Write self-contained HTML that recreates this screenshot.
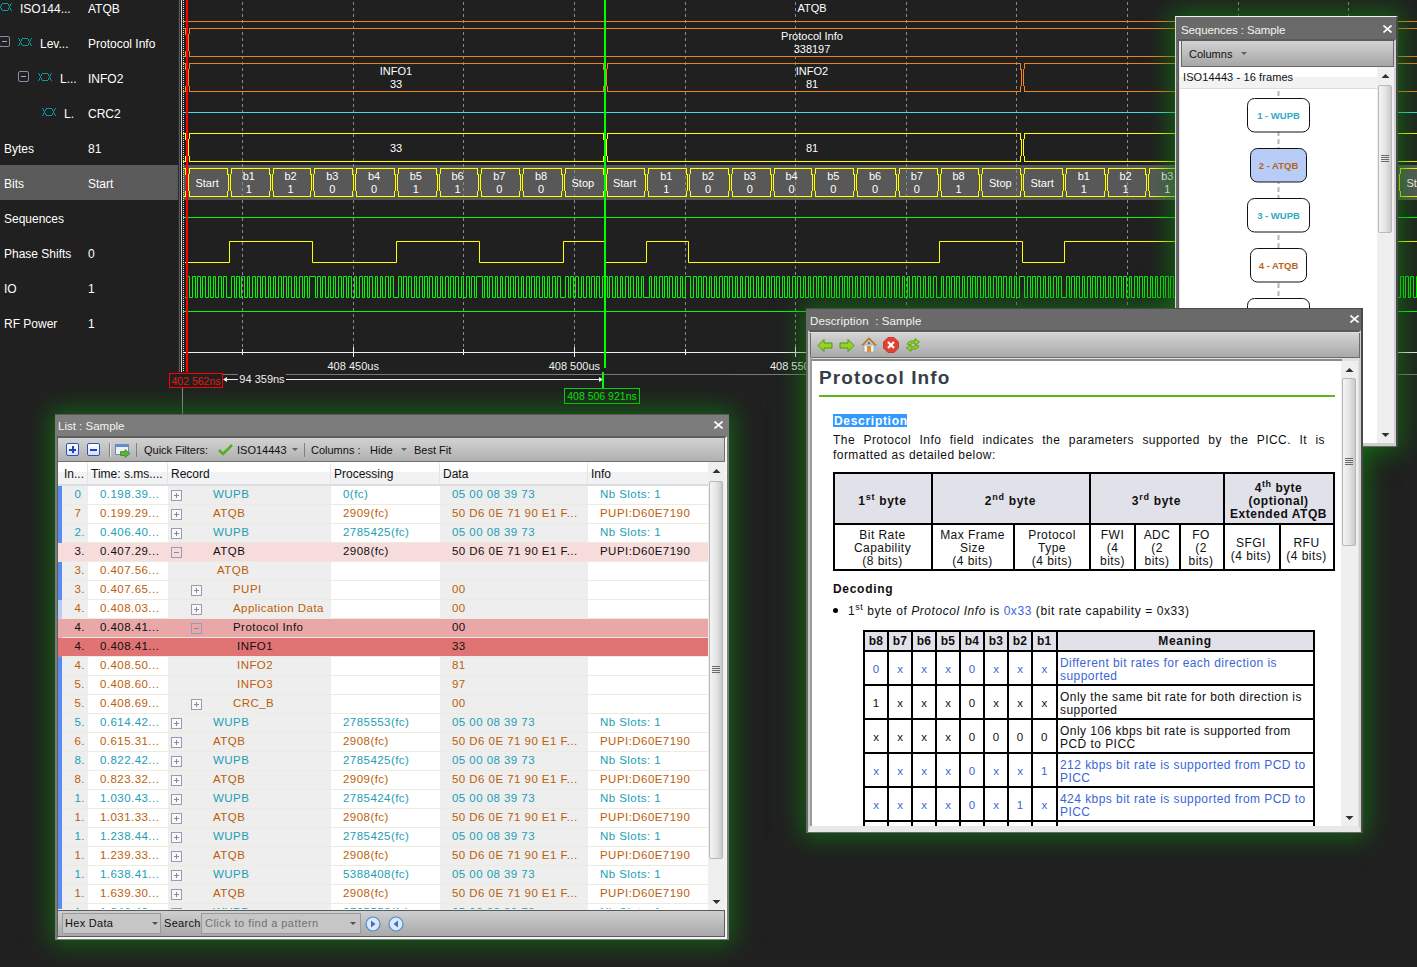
<!DOCTYPE html>
<html><head><meta charset="utf-8"><style>
html,body{margin:0;padding:0;}
body{width:1417px;height:967px;overflow:hidden;background:#202020;font-family:"Liberation Sans", sans-serif;position:relative;}
.p{position:absolute;}
</style></head><body>
<svg width="1417" height="967" style="position:absolute;left:0;top:0"><rect x="183" y="165" width="1234" height="35" fill="#585858"/><line x1="242.5" y1="2" x2="242.5" y2="347" stroke="#8a8a8a" stroke-width="1" stroke-dasharray="3,3"/><line x1="353.5" y1="2" x2="353.5" y2="347" stroke="#8a8a8a" stroke-width="1" stroke-dasharray="3,3"/><line x1="463.5" y1="2" x2="463.5" y2="347" stroke="#8a8a8a" stroke-width="1" stroke-dasharray="3,3"/><line x1="574.5" y1="2" x2="574.5" y2="347" stroke="#8a8a8a" stroke-width="1" stroke-dasharray="3,3"/><line x1="685.5" y1="2" x2="685.5" y2="347" stroke="#8a8a8a" stroke-width="1" stroke-dasharray="3,3"/><line x1="795.5" y1="2" x2="795.5" y2="347" stroke="#8a8a8a" stroke-width="1" stroke-dasharray="3,3"/><line x1="906.5" y1="2" x2="906.5" y2="347" stroke="#8a8a8a" stroke-width="1" stroke-dasharray="3,3"/><line x1="1016.5" y1="2" x2="1016.5" y2="347" stroke="#8a8a8a" stroke-width="1" stroke-dasharray="3,3"/><line x1="1127.5" y1="2" x2="1127.5" y2="347" stroke="#8a8a8a" stroke-width="1" stroke-dasharray="3,3"/><line x1="1238.5" y1="2" x2="1238.5" y2="347" stroke="#8a8a8a" stroke-width="1" stroke-dasharray="3,3"/><line x1="1348.5" y1="2" x2="1348.5" y2="347" stroke="#8a8a8a" stroke-width="1" stroke-dasharray="3,3"/><line x1="183" y1="21.5" x2="1417" y2="21.5" stroke="#f08418"/><polygon points="189.5,28.5 1598.5,28.5 1598.5,31.3 1599.5,37.46 1599.5,47.54 1598.5,53.7 1598.5,56.5 189.5,56.5 189.5,53.7 188.5,47.54 188.5,37.46 189.5,31.3" fill="none" stroke="#f08418" stroke-width="1" shape-rendering="crispEdges"/><polyline points="183,28.5 185.5,28.5 185.5,31.3 186.5,37.46 186.5,47.54 185.5,53.7 185.5,56.5 183,56.5" fill="none" stroke="#f08418" stroke-width="1" shape-rendering="crispEdges"/><polyline points="183,63.5 185.5,63.5 185.5,66.3 186.5,72.46000000000001 186.5,82.53999999999999 185.5,88.7 185.5,91.5 183,91.5" fill="none" stroke="#f08418" stroke-width="1" shape-rendering="crispEdges"/><polyline points="183,133.5 185.5,133.5 185.5,136.3 186.5,142.46 186.5,152.54 185.5,158.7 185.5,161.5 183,161.5" fill="none" stroke="#ffff00" stroke-width="1" shape-rendering="crispEdges"/><polyline points="183,168.5 185.5,168.5 185.5,171.3 186.5,177.46 186.5,187.54 185.5,193.7 185.5,196.5 183,196.5" fill="none" stroke="#ffff00" stroke-width="1" shape-rendering="crispEdges"/><polygon points="189.5,63.5 603.5,63.5 603.5,66.3 604.5,72.46000000000001 604.5,82.53999999999999 603.5,88.7 603.5,91.5 189.5,91.5 189.5,88.7 188.5,82.53999999999999 188.5,72.46000000000001 189.5,66.3" fill="none" stroke="#f08418" stroke-width="1" shape-rendering="crispEdges"/><polygon points="607.5,63.5 1020.5,63.5 1020.5,66.3 1021.5,72.46000000000001 1021.5,82.53999999999999 1020.5,88.7 1020.5,91.5 607.5,91.5 607.5,88.7 606.5,82.53999999999999 606.5,72.46000000000001 607.5,66.3" fill="none" stroke="#f08418" stroke-width="1" shape-rendering="crispEdges"/><polygon points="1024.5,63.5 1438.5,63.5 1438.5,66.3 1439.5,72.46000000000001 1439.5,82.53999999999999 1438.5,88.7 1438.5,91.5 1024.5,91.5 1024.5,88.7 1023.5,82.53999999999999 1023.5,72.46000000000001 1024.5,66.3" fill="none" stroke="#f08418" stroke-width="1" shape-rendering="crispEdges"/><line x1="183" y1="112.5" x2="1417" y2="112.5" stroke="#3ce0e8"/><polygon points="189.5,133.5 603.5,133.5 603.5,136.3 604.5,142.46 604.5,152.54 603.5,158.7 603.5,161.5 189.5,161.5 189.5,158.7 188.5,152.54 188.5,142.46 189.5,136.3" fill="none" stroke="#ffff00" stroke-width="1" shape-rendering="crispEdges"/><polygon points="607.5,133.5 1020.5,133.5 1020.5,136.3 1021.5,142.46 1021.5,152.54 1020.5,158.7 1020.5,161.5 607.5,161.5 607.5,158.7 606.5,152.54 606.5,142.46 607.5,136.3" fill="none" stroke="#ffff00" stroke-width="1" shape-rendering="crispEdges"/><polygon points="1024.5,133.5 1438.5,133.5 1438.5,136.3 1439.5,142.46 1439.5,152.54 1438.5,158.7 1438.5,161.5 1024.5,161.5 1024.5,158.7 1023.5,152.54 1023.5,142.46 1024.5,136.3" fill="none" stroke="#ffff00" stroke-width="1" shape-rendering="crispEdges"/><polygon points="189.5,168.5 227.5,168.5 227.5,171.3 228.5,177.46 228.5,187.54 227.5,193.7 227.5,196.5 189.5,196.5 189.5,193.7 188.5,187.54 188.5,177.46 189.5,171.3" fill="none" stroke="#ffff00" stroke-width="1" shape-rendering="crispEdges"/><polygon points="231.5,168.5 269.5,168.5 269.5,171.3 270.5,177.46 270.5,187.54 269.5,193.7 269.5,196.5 231.5,196.5 231.5,193.7 230.5,187.54 230.5,177.46 231.5,171.3" fill="none" stroke="#ffff00" stroke-width="1" shape-rendering="crispEdges"/><polygon points="273.5,168.5 310.5,168.5 310.5,171.3 311.5,177.46 311.5,187.54 310.5,193.7 310.5,196.5 273.5,196.5 273.5,193.7 272.5,187.54 272.5,177.46 273.5,171.3" fill="none" stroke="#ffff00" stroke-width="1" shape-rendering="crispEdges"/><polygon points="314.5,168.5 352.5,168.5 352.5,171.3 353.5,177.46 353.5,187.54 352.5,193.7 352.5,196.5 314.5,196.5 314.5,193.7 313.5,187.54 313.5,177.46 314.5,171.3" fill="none" stroke="#ffff00" stroke-width="1" shape-rendering="crispEdges"/><polygon points="356.5,168.5 394.5,168.5 394.5,171.3 395.5,177.46 395.5,187.54 394.5,193.7 394.5,196.5 356.5,196.5 356.5,193.7 355.5,187.54 355.5,177.46 356.5,171.3" fill="none" stroke="#ffff00" stroke-width="1" shape-rendering="crispEdges"/><polygon points="398.5,168.5 436.5,168.5 436.5,171.3 437.5,177.46 437.5,187.54 436.5,193.7 436.5,196.5 398.5,196.5 398.5,193.7 397.5,187.54 397.5,177.46 398.5,171.3" fill="none" stroke="#ffff00" stroke-width="1" shape-rendering="crispEdges"/><polygon points="440.5,168.5 477.5,168.5 477.5,171.3 478.5,177.46 478.5,187.54 477.5,193.7 477.5,196.5 440.5,196.5 440.5,193.7 439.5,187.54 439.5,177.46 440.5,171.3" fill="none" stroke="#ffff00" stroke-width="1" shape-rendering="crispEdges"/><polygon points="481.5,168.5 519.5,168.5 519.5,171.3 520.5,177.46 520.5,187.54 519.5,193.7 519.5,196.5 481.5,196.5 481.5,193.7 480.5,187.54 480.5,177.46 481.5,171.3" fill="none" stroke="#ffff00" stroke-width="1" shape-rendering="crispEdges"/><polygon points="523.5,168.5 561.5,168.5 561.5,171.3 562.5,177.46 562.5,187.54 561.5,193.7 561.5,196.5 523.5,196.5 523.5,193.7 522.5,187.54 522.5,177.46 523.5,171.3" fill="none" stroke="#ffff00" stroke-width="1" shape-rendering="crispEdges"/><polygon points="565.5,168.5 603.5,168.5 603.5,171.3 604.5,177.46 604.5,187.54 603.5,193.7 603.5,196.5 565.5,196.5 565.5,193.7 564.5,187.54 564.5,177.46 565.5,171.3" fill="none" stroke="#ffff00" stroke-width="1" shape-rendering="crispEdges"/><polygon points="607.5,168.5 644.5,168.5 644.5,171.3 645.5,177.46 645.5,187.54 644.5,193.7 644.5,196.5 607.5,196.5 607.5,193.7 606.5,187.54 606.5,177.46 607.5,171.3" fill="none" stroke="#ffff00" stroke-width="1" shape-rendering="crispEdges"/><polygon points="648.5,168.5 686.5,168.5 686.5,171.3 687.5,177.46 687.5,187.54 686.5,193.7 686.5,196.5 648.5,196.5 648.5,193.7 647.5,187.54 647.5,177.46 648.5,171.3" fill="none" stroke="#ffff00" stroke-width="1" shape-rendering="crispEdges"/><polygon points="690.5,168.5 728.5,168.5 728.5,171.3 729.5,177.46 729.5,187.54 728.5,193.7 728.5,196.5 690.5,196.5 690.5,193.7 689.5,187.54 689.5,177.46 690.5,171.3" fill="none" stroke="#ffff00" stroke-width="1" shape-rendering="crispEdges"/><polygon points="732.5,168.5 770.5,168.5 770.5,171.3 771.5,177.46 771.5,187.54 770.5,193.7 770.5,196.5 732.5,196.5 732.5,193.7 731.5,187.54 731.5,177.46 732.5,171.3" fill="none" stroke="#ffff00" stroke-width="1" shape-rendering="crispEdges"/><polygon points="774.5,168.5 811.5,168.5 811.5,171.3 812.5,177.46 812.5,187.54 811.5,193.7 811.5,196.5 774.5,196.5 774.5,193.7 773.5,187.54 773.5,177.46 774.5,171.3" fill="none" stroke="#ffff00" stroke-width="1" shape-rendering="crispEdges"/><polygon points="815.5,168.5 853.5,168.5 853.5,171.3 854.5,177.46 854.5,187.54 853.5,193.7 853.5,196.5 815.5,196.5 815.5,193.7 814.5,187.54 814.5,177.46 815.5,171.3" fill="none" stroke="#ffff00" stroke-width="1" shape-rendering="crispEdges"/><polygon points="857.5,168.5 895.5,168.5 895.5,171.3 896.5,177.46 896.5,187.54 895.5,193.7 895.5,196.5 857.5,196.5 857.5,193.7 856.5,187.54 856.5,177.46 857.5,171.3" fill="none" stroke="#ffff00" stroke-width="1" shape-rendering="crispEdges"/><polygon points="899.5,168.5 937.5,168.5 937.5,171.3 938.5,177.46 938.5,187.54 937.5,193.7 937.5,196.5 899.5,196.5 899.5,193.7 898.5,187.54 898.5,177.46 899.5,171.3" fill="none" stroke="#ffff00" stroke-width="1" shape-rendering="crispEdges"/><polygon points="941.5,168.5 978.5,168.5 978.5,171.3 979.5,177.46 979.5,187.54 978.5,193.7 978.5,196.5 941.5,196.5 941.5,193.7 940.5,187.54 940.5,177.46 941.5,171.3" fill="none" stroke="#ffff00" stroke-width="1" shape-rendering="crispEdges"/><polygon points="982.5,168.5 1020.5,168.5 1020.5,171.3 1021.5,177.46 1021.5,187.54 1020.5,193.7 1020.5,196.5 982.5,196.5 982.5,193.7 981.5,187.54 981.5,177.46 982.5,171.3" fill="none" stroke="#ffff00" stroke-width="1" shape-rendering="crispEdges"/><polygon points="1024.5,168.5 1062.5,168.5 1062.5,171.3 1063.5,177.46 1063.5,187.54 1062.5,193.7 1062.5,196.5 1024.5,196.5 1024.5,193.7 1023.5,187.54 1023.5,177.46 1024.5,171.3" fill="none" stroke="#ffff00" stroke-width="1" shape-rendering="crispEdges"/><polygon points="1066.5,168.5 1104.5,168.5 1104.5,171.3 1105.5,177.46 1105.5,187.54 1104.5,193.7 1104.5,196.5 1066.5,196.5 1066.5,193.7 1065.5,187.54 1065.5,177.46 1066.5,171.3" fill="none" stroke="#ffff00" stroke-width="1" shape-rendering="crispEdges"/><polygon points="1108.5,168.5 1145.5,168.5 1145.5,171.3 1146.5,177.46 1146.5,187.54 1145.5,193.7 1145.5,196.5 1108.5,196.5 1108.5,193.7 1107.5,187.54 1107.5,177.46 1108.5,171.3" fill="none" stroke="#ffff00" stroke-width="1" shape-rendering="crispEdges"/><polygon points="1149.5,168.5 1187.5,168.5 1187.5,171.3 1188.5,177.46 1188.5,187.54 1187.5,193.7 1187.5,196.5 1149.5,196.5 1149.5,193.7 1148.5,187.54 1148.5,177.46 1149.5,171.3" fill="none" stroke="#ffff00" stroke-width="1" shape-rendering="crispEdges"/><polygon points="1191.5,168.5 1229.5,168.5 1229.5,171.3 1230.5,177.46 1230.5,187.54 1229.5,193.7 1229.5,196.5 1191.5,196.5 1191.5,193.7 1190.5,187.54 1190.5,177.46 1191.5,171.3" fill="none" stroke="#ffff00" stroke-width="1" shape-rendering="crispEdges"/><polygon points="1233.5,168.5 1271.5,168.5 1271.5,171.3 1272.5,177.46 1272.5,187.54 1271.5,193.7 1271.5,196.5 1233.5,196.5 1233.5,193.7 1232.5,187.54 1232.5,177.46 1233.5,171.3" fill="none" stroke="#ffff00" stroke-width="1" shape-rendering="crispEdges"/><polygon points="1275.5,168.5 1312.5,168.5 1312.5,171.3 1313.5,177.46 1313.5,187.54 1312.5,193.7 1312.5,196.5 1275.5,196.5 1275.5,193.7 1274.5,187.54 1274.5,177.46 1275.5,171.3" fill="none" stroke="#ffff00" stroke-width="1" shape-rendering="crispEdges"/><polygon points="1316.5,168.5 1354.5,168.5 1354.5,171.3 1355.5,177.46 1355.5,187.54 1354.5,193.7 1354.5,196.5 1316.5,196.5 1316.5,193.7 1315.5,187.54 1315.5,177.46 1316.5,171.3" fill="none" stroke="#ffff00" stroke-width="1" shape-rendering="crispEdges"/><polygon points="1358.5,168.5 1396.5,168.5 1396.5,171.3 1397.5,177.46 1397.5,187.54 1396.5,193.7 1396.5,196.5 1358.5,196.5 1358.5,193.7 1357.5,187.54 1357.5,177.46 1358.5,171.3" fill="none" stroke="#ffff00" stroke-width="1" shape-rendering="crispEdges"/><polygon points="1400.5,168.5 1438.5,168.5 1438.5,171.3 1439.5,177.46 1439.5,187.54 1438.5,193.7 1438.5,196.5 1400.5,196.5 1400.5,193.7 1399.5,187.54 1399.5,177.46 1400.5,171.3" fill="none" stroke="#ffff00" stroke-width="1" shape-rendering="crispEdges"/><polygon points="1442.5,168.5 1479.5,168.5 1479.5,171.3 1480.5,177.46 1480.5,187.54 1479.5,193.7 1479.5,196.5 1442.5,196.5 1442.5,193.7 1441.5,187.54 1441.5,177.46 1442.5,171.3" fill="none" stroke="#ffff00" stroke-width="1" shape-rendering="crispEdges"/><polygon points="1483.5,168.5 1521.5,168.5 1521.5,171.3 1522.5,177.46 1522.5,187.54 1521.5,193.7 1521.5,196.5 1483.5,196.5 1483.5,193.7 1482.5,187.54 1482.5,177.46 1483.5,171.3" fill="none" stroke="#ffff00" stroke-width="1" shape-rendering="crispEdges"/><polygon points="1525.5,168.5 1563.5,168.5 1563.5,171.3 1564.5,177.46 1564.5,187.54 1563.5,193.7 1563.5,196.5 1525.5,196.5 1525.5,193.7 1524.5,187.54 1524.5,177.46 1525.5,171.3" fill="none" stroke="#ffff00" stroke-width="1" shape-rendering="crispEdges"/><polygon points="1567.5,168.5 1605.5,168.5 1605.5,171.3 1606.5,177.46 1606.5,187.54 1605.5,193.7 1605.5,196.5 1567.5,196.5 1567.5,193.7 1566.5,187.54 1566.5,177.46 1567.5,171.3" fill="none" stroke="#ffff00" stroke-width="1" shape-rendering="crispEdges"/><polygon points="1609.5,168.5 1646.5,168.5 1646.5,171.3 1647.5,177.46 1647.5,187.54 1646.5,193.7 1646.5,196.5 1609.5,196.5 1609.5,193.7 1608.5,187.54 1608.5,177.46 1609.5,171.3" fill="none" stroke="#ffff00" stroke-width="1" shape-rendering="crispEdges"/><polygon points="1650.5,168.5 1688.5,168.5 1688.5,171.3 1689.5,177.46 1689.5,187.54 1688.5,193.7 1688.5,196.5 1650.5,196.5 1650.5,193.7 1649.5,187.54 1649.5,177.46 1650.5,171.3" fill="none" stroke="#ffff00" stroke-width="1" shape-rendering="crispEdges"/><polygon points="1692.5,168.5 1730.5,168.5 1730.5,171.3 1731.5,177.46 1731.5,187.54 1730.5,193.7 1730.5,196.5 1692.5,196.5 1692.5,193.7 1691.5,187.54 1691.5,177.46 1692.5,171.3" fill="none" stroke="#ffff00" stroke-width="1" shape-rendering="crispEdges"/><polygon points="1734.5,168.5 1772.5,168.5 1772.5,171.3 1773.5,177.46 1773.5,187.54 1772.5,193.7 1772.5,196.5 1734.5,196.5 1734.5,193.7 1733.5,187.54 1733.5,177.46 1734.5,171.3" fill="none" stroke="#ffff00" stroke-width="1" shape-rendering="crispEdges"/><polygon points="1776.5,168.5 1813.5,168.5 1813.5,171.3 1814.5,177.46 1814.5,187.54 1813.5,193.7 1813.5,196.5 1776.5,196.5 1776.5,193.7 1775.5,187.54 1775.5,177.46 1776.5,171.3" fill="none" stroke="#ffff00" stroke-width="1" shape-rendering="crispEdges"/><polygon points="1817.5,168.5 1855.5,168.5 1855.5,171.3 1856.5,177.46 1856.5,187.54 1855.5,193.7 1855.5,196.5 1817.5,196.5 1817.5,193.7 1816.5,187.54 1816.5,177.46 1817.5,171.3" fill="none" stroke="#ffff00" stroke-width="1" shape-rendering="crispEdges"/><line x1="183" y1="217.5" x2="1417" y2="217.5" stroke="#00ff00"/><line x1="183" y1="311.5" x2="1417" y2="311.5" stroke="#00ff00"/><polyline points="185,262.5 229.5,262.5 229.5,241.5 312.5,241.5 312.5,262.5 396.5,262.5 396.5,241.5 479.5,241.5 479.5,262.5 563.5,262.5 563.5,241.5 605.5,241.5 605.5,262.5 646.5,262.5 646.5,241.5 688.5,241.5 688.5,262.5 939.5,262.5 939.5,241.5 1022.5,241.5 1022.5,262.5 1064.5,262.5 1064.5,241.5 1189.5,241.5 1189.5,262.5 1356.5,262.5 1356.5,241.5 1440.5,241.5 1440.5,262.5 1815.5,262.5 1815.5,241.5 1417,241.5" fill="none" stroke="#ffff00"/><path d="M185,297.5L187.5,297.5L187.5,276.5L189.5,276.5L189.5,297.5L192.5,297.5L192.5,276.5L195.5,276.5L195.5,297.5L197.5,297.5L197.5,276.5L200.5,276.5L200.5,297.5L202.5,297.5L202.5,276.5L205.5,276.5L205.5,297.5L208.5,297.5L208.5,276.5L210.5,276.5L210.5,297.5L213.5,297.5L213.5,276.5L215.5,276.5L215.5,297.5L218.5,297.5L218.5,276.5L221.5,276.5L221.5,297.5L223.5,297.5L223.5,276.5L226.5,276.5L226.5,297.5L231.5,297.5L231.5,276.5L234.5,276.5L234.5,297.5L236.5,297.5L236.5,276.5L239.5,276.5L239.5,297.5L241.5,297.5L241.5,276.5L244.5,276.5L244.5,297.5L247.5,297.5L247.5,276.5L249.5,276.5L249.5,297.5L252.5,297.5L252.5,276.5L255.5,276.5L255.5,297.5L257.5,297.5L257.5,276.5L260.5,276.5L260.5,297.5L262.5,297.5L262.5,276.5L265.5,276.5L265.5,297.5L268.5,297.5L268.5,276.5L270.5,276.5L270.5,297.5L273.5,297.5L273.5,276.5L275.5,276.5L275.5,297.5L278.5,297.5L278.5,276.5L281.5,276.5L281.5,297.5L283.5,297.5L283.5,276.5L286.5,276.5L286.5,297.5L288.5,297.5L288.5,276.5L291.5,276.5L291.5,297.5L294.5,297.5L294.5,276.5L296.5,276.5L296.5,297.5L299.5,297.5L299.5,276.5L302.5,276.5L302.5,297.5L304.5,297.5L304.5,276.5L307.5,276.5L307.5,297.5L309.5,297.5L309.5,276.5L315.5,276.5L315.5,297.5L317.5,297.5L317.5,276.5L320.5,276.5L320.5,297.5L322.5,297.5L322.5,276.5L325.5,276.5L325.5,297.5L328.5,297.5L328.5,276.5L330.5,276.5L330.5,297.5L333.5,297.5L333.5,276.5L335.5,276.5L335.5,297.5L338.5,297.5L338.5,276.5L341.5,276.5L341.5,297.5L343.5,297.5L343.5,276.5L346.5,276.5L346.5,297.5L348.5,297.5L348.5,276.5L351.5,276.5L351.5,297.5L354.5,297.5L354.5,276.5L356.5,276.5L356.5,297.5L359.5,297.5L359.5,276.5L362.5,276.5L362.5,297.5L364.5,297.5L364.5,276.5L367.5,276.5L367.5,297.5L369.5,297.5L369.5,276.5L372.5,276.5L372.5,297.5L375.5,297.5L375.5,276.5L377.5,276.5L377.5,297.5L380.5,297.5L380.5,276.5L382.5,276.5L382.5,297.5L385.5,297.5L385.5,276.5L388.5,276.5L388.5,297.5L390.5,297.5L390.5,276.5L393.5,276.5L393.5,297.5L398.5,297.5L398.5,276.5L401.5,276.5L401.5,297.5L403.5,297.5L403.5,276.5L406.5,276.5L406.5,297.5L408.5,297.5L408.5,276.5L411.5,276.5L411.5,297.5L414.5,297.5L414.5,276.5L416.5,276.5L416.5,297.5L419.5,297.5L419.5,276.5L422.5,276.5L422.5,297.5L424.5,297.5L424.5,276.5L427.5,276.5L427.5,297.5L429.5,297.5L429.5,276.5L432.5,276.5L432.5,297.5L435.5,297.5L435.5,276.5L437.5,276.5L437.5,297.5L440.5,297.5L440.5,276.5L442.5,276.5L442.5,297.5L445.5,297.5L445.5,276.5L448.5,276.5L448.5,297.5L450.5,297.5L450.5,276.5L453.5,276.5L453.5,297.5L455.5,297.5L455.5,276.5L458.5,276.5L458.5,297.5L461.5,297.5L461.5,276.5L463.5,276.5L463.5,297.5L466.5,297.5L466.5,276.5L469.5,276.5L469.5,297.5L471.5,297.5L471.5,276.5L474.5,276.5L474.5,297.5L476.5,297.5L476.5,276.5L482.5,276.5L482.5,297.5L484.5,297.5L484.5,276.5L487.5,276.5L487.5,297.5L489.5,297.5L489.5,276.5L492.5,276.5L492.5,297.5L495.5,297.5L495.5,276.5L497.5,276.5L497.5,297.5L500.5,297.5L500.5,276.5L502.5,276.5L502.5,297.5L505.5,297.5L505.5,276.5L508.5,276.5L508.5,297.5L510.5,297.5L510.5,276.5L513.5,276.5L513.5,297.5L515.5,297.5L515.5,276.5L518.5,276.5L518.5,297.5L521.5,297.5L521.5,276.5L523.5,276.5L523.5,297.5L526.5,297.5L526.5,276.5L529.5,276.5L529.5,297.5L531.5,297.5L531.5,276.5L534.5,276.5L534.5,297.5L536.5,297.5L536.5,276.5L539.5,276.5L539.5,297.5L542.5,297.5L542.5,276.5L544.5,276.5L544.5,297.5L547.5,297.5L547.5,276.5L549.5,276.5L549.5,297.5L552.5,297.5L552.5,276.5L555.5,276.5L555.5,297.5L557.5,297.5L557.5,276.5L560.5,276.5L560.5,297.5L565.5,297.5L565.5,276.5L568.5,276.5L568.5,297.5L570.5,297.5L570.5,276.5L573.5,276.5L573.5,297.5L575.5,297.5L575.5,276.5L578.5,276.5L578.5,297.5L581.5,297.5L581.5,276.5L583.5,276.5L583.5,297.5L586.5,297.5L586.5,276.5L589.5,276.5L589.5,297.5L591.5,297.5L591.5,276.5L594.5,276.5L594.5,297.5L596.5,297.5L596.5,276.5L599.5,276.5L599.5,297.5L602.5,297.5L602.5,276.5L607.5,276.5L607.5,297.5L609.5,297.5L609.5,276.5L612.5,276.5L612.5,297.5L615.5,297.5L615.5,276.5L617.5,276.5L617.5,297.5L620.5,297.5L620.5,276.5L622.5,276.5L622.5,297.5L625.5,297.5L625.5,276.5L628.5,276.5L628.5,297.5L630.5,297.5L630.5,276.5L633.5,276.5L633.5,297.5L636.5,297.5L636.5,276.5L638.5,276.5L638.5,297.5L641.5,297.5L641.5,276.5L643.5,276.5L643.5,297.5L649.5,297.5L649.5,276.5L651.5,276.5L651.5,297.5L654.5,297.5L654.5,276.5L656.5,276.5L656.5,297.5L659.5,297.5L659.5,276.5L662.5,276.5L662.5,297.5L664.5,297.5L664.5,276.5L667.5,276.5L667.5,297.5L669.5,297.5L669.5,276.5L672.5,276.5L672.5,297.5L675.5,297.5L675.5,276.5L677.5,276.5L677.5,297.5L680.5,297.5L680.5,276.5L682.5,276.5L682.5,297.5L685.5,297.5L685.5,276.5L690.5,276.5L690.5,297.5L693.5,297.5L693.5,276.5L696.5,276.5L696.5,297.5L698.5,297.5L698.5,276.5L701.5,276.5L701.5,297.5L703.5,297.5L703.5,276.5L706.5,276.5L706.5,297.5L709.5,297.5L709.5,276.5L711.5,276.5L711.5,297.5L714.5,297.5L714.5,276.5L716.5,276.5L716.5,297.5L719.5,297.5L719.5,276.5L722.5,276.5L722.5,297.5L724.5,297.5L724.5,276.5L727.5,276.5L727.5,297.5L729.5,297.5L729.5,276.5L732.5,276.5L732.5,297.5L735.5,297.5L735.5,276.5L737.5,276.5L737.5,297.5L740.5,297.5L740.5,276.5L742.5,276.5L742.5,297.5L745.5,297.5L745.5,276.5L748.5,276.5L748.5,297.5L750.5,297.5L750.5,276.5L753.5,276.5L753.5,297.5L756.5,297.5L756.5,276.5L758.5,276.5L758.5,297.5L761.5,297.5L761.5,276.5L763.5,276.5L763.5,297.5L766.5,297.5L766.5,276.5L769.5,276.5L769.5,297.5L771.5,297.5L771.5,276.5L774.5,276.5L774.5,297.5L776.5,297.5L776.5,276.5L779.5,276.5L779.5,297.5L782.5,297.5L782.5,276.5L784.5,276.5L784.5,297.5L787.5,297.5L787.5,276.5L789.5,276.5L789.5,297.5L792.5,297.5L792.5,276.5L795.5,276.5L795.5,297.5L797.5,297.5L797.5,276.5L800.5,276.5L800.5,297.5L803.5,297.5L803.5,276.5L805.5,276.5L805.5,297.5L808.5,297.5L808.5,276.5L810.5,276.5L810.5,297.5L813.5,297.5L813.5,276.5L816.5,276.5L816.5,297.5L818.5,297.5L818.5,276.5L821.5,276.5L821.5,297.5L823.5,297.5L823.5,276.5L826.5,276.5L826.5,297.5L829.5,297.5L829.5,276.5L831.5,276.5L831.5,297.5L834.5,297.5L834.5,276.5L836.5,276.5L836.5,297.5L839.5,297.5L839.5,276.5L842.5,276.5L842.5,297.5L844.5,297.5L844.5,276.5L847.5,276.5L847.5,297.5L849.5,297.5L849.5,276.5L852.5,276.5L852.5,297.5L855.5,297.5L855.5,276.5L857.5,276.5L857.5,297.5L860.5,297.5L860.5,276.5L863.5,276.5L863.5,297.5L865.5,297.5L865.5,276.5L868.5,276.5L868.5,297.5L870.5,297.5L870.5,276.5L873.5,276.5L873.5,297.5L876.5,297.5L876.5,276.5L878.5,276.5L878.5,297.5L881.5,297.5L881.5,276.5L883.5,276.5L883.5,297.5L886.5,297.5L886.5,276.5L889.5,276.5L889.5,297.5L891.5,297.5L891.5,276.5L894.5,276.5L894.5,297.5L896.5,297.5L896.5,276.5L899.5,276.5L899.5,297.5L902.5,297.5L902.5,276.5L904.5,276.5L904.5,297.5L907.5,297.5L907.5,276.5L909.5,276.5L909.5,297.5L912.5,297.5L912.5,276.5L915.5,276.5L915.5,297.5L917.5,297.5L917.5,276.5L920.5,276.5L920.5,297.5L923.5,297.5L923.5,276.5L925.5,276.5L925.5,297.5L928.5,297.5L928.5,276.5L930.5,276.5L930.5,297.5L933.5,297.5L933.5,276.5L936.5,276.5L936.5,297.5L941.5,297.5L941.5,276.5L943.5,276.5L943.5,297.5L946.5,297.5L946.5,276.5L949.5,276.5L949.5,297.5L951.5,297.5L951.5,276.5L954.5,276.5L954.5,297.5L956.5,297.5L956.5,276.5L959.5,276.5L959.5,297.5L962.5,297.5L962.5,276.5L964.5,276.5L964.5,297.5L967.5,297.5L967.5,276.5L970.5,276.5L970.5,297.5L972.5,297.5L972.5,276.5L975.5,276.5L975.5,297.5L977.5,297.5L977.5,276.5L980.5,276.5L980.5,297.5L983.5,297.5L983.5,276.5L985.5,276.5L985.5,297.5L988.5,297.5L988.5,276.5L990.5,276.5L990.5,297.5L993.5,297.5L993.5,276.5L996.5,276.5L996.5,297.5L998.5,297.5L998.5,276.5L1001.5,276.5L1001.5,297.5L1003.5,297.5L1003.5,276.5L1006.5,276.5L1006.5,297.5L1009.5,297.5L1009.5,276.5L1011.5,276.5L1011.5,297.5L1014.5,297.5L1014.5,276.5L1016.5,276.5L1016.5,297.5L1019.5,297.5L1019.5,276.5L1024.5,276.5L1024.5,297.5L1027.5,297.5L1027.5,276.5L1030.5,276.5L1030.5,297.5L1032.5,297.5L1032.5,276.5L1035.5,276.5L1035.5,297.5L1037.5,297.5L1037.5,276.5L1040.5,276.5L1040.5,297.5L1043.5,297.5L1043.5,276.5L1045.5,276.5L1045.5,297.5L1048.5,297.5L1048.5,276.5L1050.5,276.5L1050.5,297.5L1053.5,297.5L1053.5,276.5L1056.5,276.5L1056.5,297.5L1058.5,297.5L1058.5,276.5L1061.5,276.5L1061.5,297.5L1066.5,297.5L1066.5,276.5L1069.5,276.5L1069.5,297.5L1071.5,297.5L1071.5,276.5L1074.5,276.5L1074.5,297.5L1076.5,297.5L1076.5,276.5L1079.5,276.5L1079.5,297.5L1082.5,297.5L1082.5,276.5L1084.5,276.5L1084.5,297.5L1087.5,297.5L1087.5,276.5L1090.5,276.5L1090.5,297.5L1092.5,297.5L1092.5,276.5L1095.5,276.5L1095.5,297.5L1097.5,297.5L1097.5,276.5L1100.5,276.5L1100.5,297.5L1103.5,297.5L1103.5,276.5L1105.5,276.5L1105.5,297.5L1108.5,297.5L1108.5,276.5L1110.5,276.5L1110.5,297.5L1113.5,297.5L1113.5,276.5L1116.5,276.5L1116.5,297.5L1118.5,297.5L1118.5,276.5L1121.5,276.5L1121.5,297.5L1123.5,297.5L1123.5,276.5L1126.5,276.5L1126.5,297.5L1129.5,297.5L1129.5,276.5L1131.5,276.5L1131.5,297.5L1134.5,297.5L1134.5,276.5L1137.5,276.5L1137.5,297.5L1139.5,297.5L1139.5,276.5L1142.5,276.5L1142.5,297.5L1144.5,297.5L1144.5,276.5L1147.5,276.5L1147.5,297.5L1150.5,297.5L1150.5,276.5L1152.5,276.5L1152.5,297.5L1155.5,297.5L1155.5,276.5L1157.5,276.5L1157.5,297.5L1160.5,297.5L1160.5,276.5L1163.5,276.5L1163.5,297.5L1165.5,297.5L1165.5,276.5L1168.5,276.5L1168.5,297.5L1170.5,297.5L1170.5,276.5L1173.5,276.5L1173.5,297.5L1176.5,297.5L1176.5,276.5L1178.5,276.5L1178.5,297.5L1181.5,297.5L1181.5,276.5L1183.5,276.5L1183.5,297.5L1186.5,297.5L1186.5,276.5L1191.5,276.5L1191.5,297.5L1194.5,297.5L1194.5,276.5L1197.5,276.5L1197.5,297.5L1199.5,297.5L1199.5,276.5L1202.5,276.5L1202.5,297.5L1204.5,297.5L1204.5,276.5L1207.5,276.5L1207.5,297.5L1210.5,297.5L1210.5,276.5L1212.5,276.5L1212.5,297.5L1215.5,297.5L1215.5,276.5L1217.5,276.5L1217.5,297.5L1220.5,297.5L1220.5,276.5L1223.5,276.5L1223.5,297.5L1225.5,297.5L1225.5,276.5L1228.5,276.5L1228.5,297.5L1230.5,297.5L1230.5,276.5L1233.5,276.5L1233.5,297.5L1236.5,297.5L1236.5,276.5L1238.5,276.5L1238.5,297.5L1241.5,297.5L1241.5,276.5L1243.5,276.5L1243.5,297.5L1246.5,297.5L1246.5,276.5L1249.5,276.5L1249.5,297.5L1251.5,297.5L1251.5,276.5L1254.5,276.5L1254.5,297.5L1257.5,297.5L1257.5,276.5L1259.5,276.5L1259.5,297.5L1262.5,297.5L1262.5,276.5L1264.5,276.5L1264.5,297.5L1267.5,297.5L1267.5,276.5L1270.5,276.5L1270.5,297.5L1272.5,297.5L1272.5,276.5L1275.5,276.5L1275.5,297.5L1277.5,297.5L1277.5,276.5L1280.5,276.5L1280.5,297.5L1283.5,297.5L1283.5,276.5L1285.5,276.5L1285.5,297.5L1288.5,297.5L1288.5,276.5L1290.5,276.5L1290.5,297.5L1293.5,297.5L1293.5,276.5L1296.5,276.5L1296.5,297.5L1298.5,297.5L1298.5,276.5L1301.5,276.5L1301.5,297.5L1304.5,297.5L1304.5,276.5L1306.5,276.5L1306.5,297.5L1309.5,297.5L1309.5,276.5L1311.5,276.5L1311.5,297.5L1314.5,297.5L1314.5,276.5L1317.5,276.5L1317.5,297.5L1319.5,297.5L1319.5,276.5L1322.5,276.5L1322.5,297.5L1324.5,297.5L1324.5,276.5L1327.5,276.5L1327.5,297.5L1330.5,297.5L1330.5,276.5L1332.5,276.5L1332.5,297.5L1335.5,297.5L1335.5,276.5L1337.5,276.5L1337.5,297.5L1340.5,297.5L1340.5,276.5L1343.5,276.5L1343.5,297.5L1345.5,297.5L1345.5,276.5L1348.5,276.5L1348.5,297.5L1350.5,297.5L1350.5,276.5L1353.5,276.5L1353.5,297.5L1358.5,297.5L1358.5,276.5L1361.5,276.5L1361.5,297.5L1364.5,297.5L1364.5,276.5L1366.5,276.5L1366.5,297.5L1369.5,297.5L1369.5,276.5L1371.5,276.5L1371.5,297.5L1374.5,297.5L1374.5,276.5L1377.5,276.5L1377.5,297.5L1379.5,297.5L1379.5,276.5L1382.5,276.5L1382.5,297.5L1384.5,297.5L1384.5,276.5L1387.5,276.5L1387.5,297.5L1390.5,297.5L1390.5,276.5L1392.5,276.5L1392.5,297.5L1395.5,297.5L1395.5,276.5L1397.5,276.5L1397.5,297.5L1400.5,297.5L1400.5,276.5L1403.5,276.5L1403.5,297.5L1405.5,297.5L1405.5,276.5L1408.5,276.5L1408.5,297.5L1410.5,297.5L1410.5,276.5L1413.5,276.5L1413.5,297.5L1416.5,297.5L1416.5,276.5L1418.5,276.5L1418.5,297.5L1417,297.5" fill="none" stroke="#00f800" stroke-width="1"/><text x="812" y="12" fill="#ffffff" font-size="11" text-anchor="middle" font-family='"Liberation Sans", sans-serif'>ATQB</text><text x="812" y="40" fill="#ffffff" font-size="11" text-anchor="middle" font-family='"Liberation Sans", sans-serif'>Protocol Info</text><text x="812" y="53" fill="#ffffff" font-size="11" text-anchor="middle" font-family='"Liberation Sans", sans-serif'>338197</text><text x="396" y="75" fill="#ffffff" font-size="11" text-anchor="middle" font-family='"Liberation Sans", sans-serif'>INFO1</text><text x="396" y="88" fill="#ffffff" font-size="11" text-anchor="middle" font-family='"Liberation Sans", sans-serif'>33</text><text x="812" y="75" fill="#ffffff" font-size="11" text-anchor="middle" font-family='"Liberation Sans", sans-serif'>INFO2</text><text x="812" y="88" fill="#ffffff" font-size="11" text-anchor="middle" font-family='"Liberation Sans", sans-serif'>81</text><text x="396" y="152" fill="#ffffff" font-size="11" text-anchor="middle" font-family='"Liberation Sans", sans-serif'>33</text><text x="812" y="152" fill="#ffffff" font-size="11" text-anchor="middle" font-family='"Liberation Sans", sans-serif'>81</text><text x="207.075" y="187" fill="#ffffff" font-size="11" text-anchor="middle" font-family='"Liberation Sans", sans-serif'>Start</text><text x="248.825" y="180" fill="#ffffff" font-size="11" text-anchor="middle" font-family='"Liberation Sans", sans-serif'>b1</text><text x="248.825" y="193" fill="#ffffff" font-size="11" text-anchor="middle" font-family='"Liberation Sans", sans-serif'>1</text><text x="290.575" y="180" fill="#ffffff" font-size="11" text-anchor="middle" font-family='"Liberation Sans", sans-serif'>b2</text><text x="290.575" y="193" fill="#ffffff" font-size="11" text-anchor="middle" font-family='"Liberation Sans", sans-serif'>1</text><text x="332.325" y="180" fill="#ffffff" font-size="11" text-anchor="middle" font-family='"Liberation Sans", sans-serif'>b3</text><text x="332.325" y="193" fill="#ffffff" font-size="11" text-anchor="middle" font-family='"Liberation Sans", sans-serif'>0</text><text x="374.075" y="180" fill="#ffffff" font-size="11" text-anchor="middle" font-family='"Liberation Sans", sans-serif'>b4</text><text x="374.075" y="193" fill="#ffffff" font-size="11" text-anchor="middle" font-family='"Liberation Sans", sans-serif'>0</text><text x="415.825" y="180" fill="#ffffff" font-size="11" text-anchor="middle" font-family='"Liberation Sans", sans-serif'>b5</text><text x="415.825" y="193" fill="#ffffff" font-size="11" text-anchor="middle" font-family='"Liberation Sans", sans-serif'>1</text><text x="457.575" y="180" fill="#ffffff" font-size="11" text-anchor="middle" font-family='"Liberation Sans", sans-serif'>b6</text><text x="457.575" y="193" fill="#ffffff" font-size="11" text-anchor="middle" font-family='"Liberation Sans", sans-serif'>1</text><text x="499.325" y="180" fill="#ffffff" font-size="11" text-anchor="middle" font-family='"Liberation Sans", sans-serif'>b7</text><text x="499.325" y="193" fill="#ffffff" font-size="11" text-anchor="middle" font-family='"Liberation Sans", sans-serif'>0</text><text x="541.075" y="180" fill="#ffffff" font-size="11" text-anchor="middle" font-family='"Liberation Sans", sans-serif'>b8</text><text x="541.075" y="193" fill="#ffffff" font-size="11" text-anchor="middle" font-family='"Liberation Sans", sans-serif'>0</text><text x="582.825" y="187" fill="#ffffff" font-size="11" text-anchor="middle" font-family='"Liberation Sans", sans-serif'>Stop</text><text x="624.575" y="187" fill="#ffffff" font-size="11" text-anchor="middle" font-family='"Liberation Sans", sans-serif'>Start</text><text x="666.325" y="180" fill="#ffffff" font-size="11" text-anchor="middle" font-family='"Liberation Sans", sans-serif'>b1</text><text x="666.325" y="193" fill="#ffffff" font-size="11" text-anchor="middle" font-family='"Liberation Sans", sans-serif'>1</text><text x="708.075" y="180" fill="#ffffff" font-size="11" text-anchor="middle" font-family='"Liberation Sans", sans-serif'>b2</text><text x="708.075" y="193" fill="#ffffff" font-size="11" text-anchor="middle" font-family='"Liberation Sans", sans-serif'>0</text><text x="749.825" y="180" fill="#ffffff" font-size="11" text-anchor="middle" font-family='"Liberation Sans", sans-serif'>b3</text><text x="749.825" y="193" fill="#ffffff" font-size="11" text-anchor="middle" font-family='"Liberation Sans", sans-serif'>0</text><text x="791.575" y="180" fill="#ffffff" font-size="11" text-anchor="middle" font-family='"Liberation Sans", sans-serif'>b4</text><text x="791.575" y="193" fill="#ffffff" font-size="11" text-anchor="middle" font-family='"Liberation Sans", sans-serif'>0</text><text x="833.325" y="180" fill="#ffffff" font-size="11" text-anchor="middle" font-family='"Liberation Sans", sans-serif'>b5</text><text x="833.325" y="193" fill="#ffffff" font-size="11" text-anchor="middle" font-family='"Liberation Sans", sans-serif'>0</text><text x="875.075" y="180" fill="#ffffff" font-size="11" text-anchor="middle" font-family='"Liberation Sans", sans-serif'>b6</text><text x="875.075" y="193" fill="#ffffff" font-size="11" text-anchor="middle" font-family='"Liberation Sans", sans-serif'>0</text><text x="916.825" y="180" fill="#ffffff" font-size="11" text-anchor="middle" font-family='"Liberation Sans", sans-serif'>b7</text><text x="916.825" y="193" fill="#ffffff" font-size="11" text-anchor="middle" font-family='"Liberation Sans", sans-serif'>0</text><text x="958.575" y="180" fill="#ffffff" font-size="11" text-anchor="middle" font-family='"Liberation Sans", sans-serif'>b8</text><text x="958.575" y="193" fill="#ffffff" font-size="11" text-anchor="middle" font-family='"Liberation Sans", sans-serif'>1</text><text x="1000.325" y="187" fill="#ffffff" font-size="11" text-anchor="middle" font-family='"Liberation Sans", sans-serif'>Stop</text><text x="1042.075" y="187" fill="#ffffff" font-size="11" text-anchor="middle" font-family='"Liberation Sans", sans-serif'>Start</text><text x="1083.825" y="180" fill="#ffffff" font-size="11" text-anchor="middle" font-family='"Liberation Sans", sans-serif'>b1</text><text x="1083.825" y="193" fill="#ffffff" font-size="11" text-anchor="middle" font-family='"Liberation Sans", sans-serif'>1</text><text x="1125.575" y="180" fill="#ffffff" font-size="11" text-anchor="middle" font-family='"Liberation Sans", sans-serif'>b2</text><text x="1125.575" y="193" fill="#ffffff" font-size="11" text-anchor="middle" font-family='"Liberation Sans", sans-serif'>1</text><text x="1167.325" y="180" fill="#ffffff" font-size="11" text-anchor="middle" font-family='"Liberation Sans", sans-serif'>b3</text><text x="1167.325" y="193" fill="#ffffff" font-size="11" text-anchor="middle" font-family='"Liberation Sans", sans-serif'>1</text><text x="1209.075" y="180" fill="#ffffff" font-size="11" text-anchor="middle" font-family='"Liberation Sans", sans-serif'>b4</text><text x="1209.075" y="193" fill="#ffffff" font-size="11" text-anchor="middle" font-family='"Liberation Sans", sans-serif'>0</text><text x="1250.825" y="180" fill="#ffffff" font-size="11" text-anchor="middle" font-family='"Liberation Sans", sans-serif'>b5</text><text x="1250.825" y="193" fill="#ffffff" font-size="11" text-anchor="middle" font-family='"Liberation Sans", sans-serif'>0</text><text x="1292.575" y="180" fill="#ffffff" font-size="11" text-anchor="middle" font-family='"Liberation Sans", sans-serif'>b6</text><text x="1292.575" y="193" fill="#ffffff" font-size="11" text-anchor="middle" font-family='"Liberation Sans", sans-serif'>0</text><text x="1334.325" y="180" fill="#ffffff" font-size="11" text-anchor="middle" font-family='"Liberation Sans", sans-serif'>b7</text><text x="1334.325" y="193" fill="#ffffff" font-size="11" text-anchor="middle" font-family='"Liberation Sans", sans-serif'>0</text><text x="1376.075" y="180" fill="#ffffff" font-size="11" text-anchor="middle" font-family='"Liberation Sans", sans-serif'>b8</text><text x="1376.075" y="193" fill="#ffffff" font-size="11" text-anchor="middle" font-family='"Liberation Sans", sans-serif'>1</text><text x="1417.825" y="187" fill="#ffffff" font-size="11" text-anchor="middle" font-family='"Liberation Sans", sans-serif'>Stop</text><text x="1459.575" y="187" fill="#ffffff" font-size="11" text-anchor="middle" font-family='"Liberation Sans", sans-serif'>Start</text><text x="1501.325" y="180" fill="#ffffff" font-size="11" text-anchor="middle" font-family='"Liberation Sans", sans-serif'>b1</text><text x="1501.325" y="193" fill="#ffffff" font-size="11" text-anchor="middle" font-family='"Liberation Sans", sans-serif'>0</text><text x="1543.075" y="180" fill="#ffffff" font-size="11" text-anchor="middle" font-family='"Liberation Sans", sans-serif'>b2</text><text x="1543.075" y="193" fill="#ffffff" font-size="11" text-anchor="middle" font-family='"Liberation Sans", sans-serif'>0</text><text x="1584.825" y="180" fill="#ffffff" font-size="11" text-anchor="middle" font-family='"Liberation Sans", sans-serif'>b3</text><text x="1584.825" y="193" fill="#ffffff" font-size="11" text-anchor="middle" font-family='"Liberation Sans", sans-serif'>0</text><text x="1626.575" y="180" fill="#ffffff" font-size="11" text-anchor="middle" font-family='"Liberation Sans", sans-serif'>b4</text><text x="1626.575" y="193" fill="#ffffff" font-size="11" text-anchor="middle" font-family='"Liberation Sans", sans-serif'>0</text><text x="1668.325" y="180" fill="#ffffff" font-size="11" text-anchor="middle" font-family='"Liberation Sans", sans-serif'>b5</text><text x="1668.325" y="193" fill="#ffffff" font-size="11" text-anchor="middle" font-family='"Liberation Sans", sans-serif'>0</text><text x="1710.075" y="180" fill="#ffffff" font-size="11" text-anchor="middle" font-family='"Liberation Sans", sans-serif'>b6</text><text x="1710.075" y="193" fill="#ffffff" font-size="11" text-anchor="middle" font-family='"Liberation Sans", sans-serif'>0</text><text x="1751.825" y="180" fill="#ffffff" font-size="11" text-anchor="middle" font-family='"Liberation Sans", sans-serif'>b7</text><text x="1751.825" y="193" fill="#ffffff" font-size="11" text-anchor="middle" font-family='"Liberation Sans", sans-serif'>0</text><text x="1793.575" y="180" fill="#ffffff" font-size="11" text-anchor="middle" font-family='"Liberation Sans", sans-serif'>b8</text><text x="1793.575" y="193" fill="#ffffff" font-size="11" text-anchor="middle" font-family='"Liberation Sans", sans-serif'>0</text><text x="1835.325" y="187" fill="#ffffff" font-size="11" text-anchor="middle" font-family='"Liberation Sans", sans-serif'>Stop</text><line x1="183" y1="352.5" x2="1417" y2="352.5" stroke="#f0f0f0"/><line x1="242.5" y1="349" x2="242.5" y2="355" stroke="#f0f0f0"/><line x1="353.5" y1="347" x2="353.5" y2="357" stroke="#f0f0f0"/><line x1="463.5" y1="349" x2="463.5" y2="355" stroke="#f0f0f0"/><line x1="574.5" y1="347" x2="574.5" y2="357" stroke="#f0f0f0"/><line x1="685.5" y1="349" x2="685.5" y2="355" stroke="#f0f0f0"/><line x1="795.5" y1="347" x2="795.5" y2="357" stroke="#f0f0f0"/><line x1="906.5" y1="349" x2="906.5" y2="355" stroke="#f0f0f0"/><line x1="1016.5" y1="347" x2="1016.5" y2="357" stroke="#f0f0f0"/><line x1="1127.5" y1="349" x2="1127.5" y2="355" stroke="#f0f0f0"/><line x1="1238.5" y1="347" x2="1238.5" y2="357" stroke="#f0f0f0"/><line x1="1348.5" y1="349" x2="1348.5" y2="355" stroke="#f0f0f0"/><text x="353.2" y="370" fill="#f0f0f0" font-size="11" text-anchor="middle" font-family='"Liberation Sans", sans-serif'>408 450us</text><text x="574.4" y="370" fill="#f0f0f0" font-size="11" text-anchor="middle" font-family='"Liberation Sans", sans-serif'>408 500us</text><text x="795.6" y="370" fill="#f0f0f0" font-size="11" text-anchor="middle" font-family='"Liberation Sans", sans-serif'>408 550us</text><text x="1016.8" y="370" fill="#f0f0f0" font-size="11" text-anchor="middle" font-family='"Liberation Sans", sans-serif'>408 600us</text><text x="1238.0" y="370" fill="#f0f0f0" font-size="11" text-anchor="middle" font-family='"Liberation Sans", sans-serif'>408 650us</text><line x1="223" y1="374.5" x2="1417" y2="374.5" stroke="#7a7a7a"/><line x1="226" y1="379.5" x2="600" y2="379.5" stroke="#f0f0f0"/><polygon points="223,379.5 227,377 227,382" fill="#f0f0f0"/><polygon points="603,379.5 599,377 599,382" fill="#f0f0f0"/><rect x="238" y="372" width="48" height="14" fill="#202020"/><text x="262" y="383" fill="#f0f0f0" font-size="11" text-anchor="middle" font-family='"Liberation Sans", sans-serif'>94 359ns</text><rect x="186" y="0" width="2" height="372" fill="#ff0000"/><rect x="169.5" y="373.5" width="53" height="14" fill="#202020" stroke="#ff0000"/><text x="196" y="384.5" fill="#e81818" font-size="10.5" text-anchor="middle" font-family='"Liberation Sans", sans-serif'>402 562ns</text><rect x="604" y="0" width="2" height="368" fill="#00ff00"/><rect x="602" y="372" width="2" height="17" fill="#00ff00"/><rect x="564.5" y="388.5" width="75" height="15" fill="#202020" stroke="#00dd00"/><text x="602" y="400" fill="#00ee00" font-size="10.5" text-anchor="middle" font-family='"Liberation Sans", sans-serif'>408 506 921ns</text></svg>
<div style="position:absolute;left:0;top:165px;width:178px;height:35px;background:#5a5a5a"></div><div style="position:absolute;left:178px;top:0;width:1px;height:372px;background:#2c2c2c"></div><div style="position:absolute;left:179px;top:0;width:1px;height:372px;background:#5a5a5a"></div><div style="position:absolute;left:181px;top:0;width:1px;height:372px;background:#d8d8d8"></div><div style="position:absolute;left:183px;top:0;width:1px;height:372px;background:repeating-linear-gradient(#e0e0e0 0 1px, transparent 1px 2px)"></div><div style="position:absolute;left:182px;top:388px;width:1px;height:26px;background:#8a8a8a"></div><div style="position:absolute;left:20px;top:1px;height:16px;line-height:16px;font-size:12px;color:#ffffff;white-space:nowrap">ISO144...</div><div style="position:absolute;left:88px;top:1px;height:16px;line-height:16px;font-size:12px;color:#ffffff;white-space:nowrap">ATQB</div><div style="position:absolute;left:40px;top:36px;height:16px;line-height:16px;font-size:12px;color:#ffffff;white-space:nowrap">Lev...</div><div style="position:absolute;left:88px;top:36px;height:16px;line-height:16px;font-size:12px;color:#ffffff;white-space:nowrap">Protocol Info</div><div style="position:absolute;left:60px;top:71px;height:16px;line-height:16px;font-size:12px;color:#ffffff;white-space:nowrap">L...</div><div style="position:absolute;left:88px;top:71px;height:16px;line-height:16px;font-size:12px;color:#ffffff;white-space:nowrap">INFO2</div><div style="position:absolute;left:64px;top:106px;height:16px;line-height:16px;font-size:12px;color:#ffffff;white-space:nowrap">L.</div><div style="position:absolute;left:88px;top:106px;height:16px;line-height:16px;font-size:12px;color:#ffffff;white-space:nowrap">CRC2</div><div style="position:absolute;left:4px;top:141px;height:16px;line-height:16px;font-size:12px;color:#ffffff;white-space:nowrap">Bytes</div><div style="position:absolute;left:88px;top:141px;height:16px;line-height:16px;font-size:12px;color:#ffffff;white-space:nowrap">81</div><div style="position:absolute;left:4px;top:176px;height:16px;line-height:16px;font-size:12px;color:#ffffff;white-space:nowrap">Bits</div><div style="position:absolute;left:88px;top:176px;height:16px;line-height:16px;font-size:12px;color:#ffffff;white-space:nowrap">Start</div><div style="position:absolute;left:4px;top:211px;height:16px;line-height:16px;font-size:12px;color:#ffffff;white-space:nowrap">Sequences</div><div style="position:absolute;left:4px;top:246px;height:16px;line-height:16px;font-size:12px;color:#ffffff;white-space:nowrap">Phase Shifts</div><div style="position:absolute;left:88px;top:246px;height:16px;line-height:16px;font-size:12px;color:#ffffff;white-space:nowrap">0</div><div style="position:absolute;left:4px;top:281px;height:16px;line-height:16px;font-size:12px;color:#ffffff;white-space:nowrap">IO</div><div style="position:absolute;left:88px;top:281px;height:16px;line-height:16px;font-size:12px;color:#ffffff;white-space:nowrap">1</div><div style="position:absolute;left:4px;top:316px;height:16px;line-height:16px;font-size:12px;color:#ffffff;white-space:nowrap">RF Power</div><div style="position:absolute;left:88px;top:316px;height:16px;line-height:16px;font-size:12px;color:#ffffff;white-space:nowrap">1</div><svg style="position:absolute;left:-2px;top:3px" width="14" height="8" shape-rendering="crispEdges"><g fill="#0a9898"><rect x="0" y="0" width="1" height="1"/><rect x="4" y="0" width="1" height="1"/><rect x="5" y="0" width="1" height="1"/><rect x="6" y="0" width="1" height="1"/><rect x="7" y="0" width="1" height="1"/><rect x="8" y="0" width="1" height="1"/><rect x="9" y="0" width="1" height="1"/><rect x="13" y="0" width="1" height="1"/><rect x="1" y="1" width="1" height="1"/><rect x="3" y="1" width="1" height="1"/><rect x="10" y="1" width="1" height="1"/><rect x="12" y="1" width="1" height="1"/><rect x="1" y="2" width="1" height="1"/><rect x="3" y="2" width="1" height="1"/><rect x="10" y="2" width="1" height="1"/><rect x="12" y="2" width="1" height="1"/><rect x="2" y="3" width="1" height="1"/><rect x="11" y="3" width="1" height="1"/><rect x="2" y="4" width="1" height="1"/><rect x="11" y="4" width="1" height="1"/><rect x="1" y="5" width="1" height="1"/><rect x="3" y="5" width="1" height="1"/><rect x="10" y="5" width="1" height="1"/><rect x="12" y="5" width="1" height="1"/><rect x="1" y="6" width="1" height="1"/><rect x="3" y="6" width="1" height="1"/><rect x="10" y="6" width="1" height="1"/><rect x="12" y="6" width="1" height="1"/><rect x="0" y="7" width="1" height="1"/><rect x="4" y="7" width="1" height="1"/><rect x="5" y="7" width="1" height="1"/><rect x="6" y="7" width="1" height="1"/><rect x="7" y="7" width="1" height="1"/><rect x="8" y="7" width="1" height="1"/><rect x="9" y="7" width="1" height="1"/><rect x="13" y="7" width="1" height="1"/></g></svg><svg style="position:absolute;left:18px;top:38px" width="14" height="8" shape-rendering="crispEdges"><g fill="#0a9898"><rect x="0" y="0" width="1" height="1"/><rect x="4" y="0" width="1" height="1"/><rect x="5" y="0" width="1" height="1"/><rect x="6" y="0" width="1" height="1"/><rect x="7" y="0" width="1" height="1"/><rect x="8" y="0" width="1" height="1"/><rect x="9" y="0" width="1" height="1"/><rect x="13" y="0" width="1" height="1"/><rect x="1" y="1" width="1" height="1"/><rect x="3" y="1" width="1" height="1"/><rect x="10" y="1" width="1" height="1"/><rect x="12" y="1" width="1" height="1"/><rect x="1" y="2" width="1" height="1"/><rect x="3" y="2" width="1" height="1"/><rect x="10" y="2" width="1" height="1"/><rect x="12" y="2" width="1" height="1"/><rect x="2" y="3" width="1" height="1"/><rect x="11" y="3" width="1" height="1"/><rect x="2" y="4" width="1" height="1"/><rect x="11" y="4" width="1" height="1"/><rect x="1" y="5" width="1" height="1"/><rect x="3" y="5" width="1" height="1"/><rect x="10" y="5" width="1" height="1"/><rect x="12" y="5" width="1" height="1"/><rect x="1" y="6" width="1" height="1"/><rect x="3" y="6" width="1" height="1"/><rect x="10" y="6" width="1" height="1"/><rect x="12" y="6" width="1" height="1"/><rect x="0" y="7" width="1" height="1"/><rect x="4" y="7" width="1" height="1"/><rect x="5" y="7" width="1" height="1"/><rect x="6" y="7" width="1" height="1"/><rect x="7" y="7" width="1" height="1"/><rect x="8" y="7" width="1" height="1"/><rect x="9" y="7" width="1" height="1"/><rect x="13" y="7" width="1" height="1"/></g></svg><svg style="position:absolute;left:38px;top:73px" width="14" height="8" shape-rendering="crispEdges"><g fill="#0a9898"><rect x="0" y="0" width="1" height="1"/><rect x="4" y="0" width="1" height="1"/><rect x="5" y="0" width="1" height="1"/><rect x="6" y="0" width="1" height="1"/><rect x="7" y="0" width="1" height="1"/><rect x="8" y="0" width="1" height="1"/><rect x="9" y="0" width="1" height="1"/><rect x="13" y="0" width="1" height="1"/><rect x="1" y="1" width="1" height="1"/><rect x="3" y="1" width="1" height="1"/><rect x="10" y="1" width="1" height="1"/><rect x="12" y="1" width="1" height="1"/><rect x="1" y="2" width="1" height="1"/><rect x="3" y="2" width="1" height="1"/><rect x="10" y="2" width="1" height="1"/><rect x="12" y="2" width="1" height="1"/><rect x="2" y="3" width="1" height="1"/><rect x="11" y="3" width="1" height="1"/><rect x="2" y="4" width="1" height="1"/><rect x="11" y="4" width="1" height="1"/><rect x="1" y="5" width="1" height="1"/><rect x="3" y="5" width="1" height="1"/><rect x="10" y="5" width="1" height="1"/><rect x="12" y="5" width="1" height="1"/><rect x="1" y="6" width="1" height="1"/><rect x="3" y="6" width="1" height="1"/><rect x="10" y="6" width="1" height="1"/><rect x="12" y="6" width="1" height="1"/><rect x="0" y="7" width="1" height="1"/><rect x="4" y="7" width="1" height="1"/><rect x="5" y="7" width="1" height="1"/><rect x="6" y="7" width="1" height="1"/><rect x="7" y="7" width="1" height="1"/><rect x="8" y="7" width="1" height="1"/><rect x="9" y="7" width="1" height="1"/><rect x="13" y="7" width="1" height="1"/></g></svg><svg style="position:absolute;left:42px;top:108px" width="14" height="8" shape-rendering="crispEdges"><g fill="#0a9898"><rect x="0" y="0" width="1" height="1"/><rect x="4" y="0" width="1" height="1"/><rect x="5" y="0" width="1" height="1"/><rect x="6" y="0" width="1" height="1"/><rect x="7" y="0" width="1" height="1"/><rect x="8" y="0" width="1" height="1"/><rect x="9" y="0" width="1" height="1"/><rect x="13" y="0" width="1" height="1"/><rect x="1" y="1" width="1" height="1"/><rect x="3" y="1" width="1" height="1"/><rect x="10" y="1" width="1" height="1"/><rect x="12" y="1" width="1" height="1"/><rect x="1" y="2" width="1" height="1"/><rect x="3" y="2" width="1" height="1"/><rect x="10" y="2" width="1" height="1"/><rect x="12" y="2" width="1" height="1"/><rect x="2" y="3" width="1" height="1"/><rect x="11" y="3" width="1" height="1"/><rect x="2" y="4" width="1" height="1"/><rect x="11" y="4" width="1" height="1"/><rect x="1" y="5" width="1" height="1"/><rect x="3" y="5" width="1" height="1"/><rect x="10" y="5" width="1" height="1"/><rect x="12" y="5" width="1" height="1"/><rect x="1" y="6" width="1" height="1"/><rect x="3" y="6" width="1" height="1"/><rect x="10" y="6" width="1" height="1"/><rect x="12" y="6" width="1" height="1"/><rect x="0" y="7" width="1" height="1"/><rect x="4" y="7" width="1" height="1"/><rect x="5" y="7" width="1" height="1"/><rect x="6" y="7" width="1" height="1"/><rect x="7" y="7" width="1" height="1"/><rect x="8" y="7" width="1" height="1"/><rect x="9" y="7" width="1" height="1"/><rect x="13" y="7" width="1" height="1"/></g></svg><div style="position:absolute;left:-1px;top:36px;width:11px;height:11px;box-sizing:border-box;border:1px solid #8c8caa;border-radius:2px"><div style="position:absolute;left:2px;top:4px;width:5px;height:1px;background:#a8a8c0"></div></div><div style="position:absolute;left:18px;top:71px;width:11px;height:11px;box-sizing:border-box;border:1px solid #8c8caa;border-radius:2px"><div style="position:absolute;left:2px;top:4px;width:5px;height:1px;background:#a8a8c0"></div></div>
<div class="p" style="left:55px;top:414px;width:674px;height:526px;box-shadow:0 0 24px 4px rgba(18,118,18,0.78);"></div>
<div class="p" style="left:1175px;top:16px;width:223px;height:431px;box-shadow:0 0 24px 4px rgba(18,118,18,0.78);"></div>
<div class="p" style="left:806px;top:308px;width:557px;height:525px;box-shadow:0 0 24px 4px rgba(18,118,18,0.78);"></div>
<div class="p" style="left:55px;top:414px;width:674px;height:526px;background:#7c7c7c;border-top:1px solid #5a5a5a;box-sizing:border-box;"></div>
<div class="p" style="left:58px;top:418px;height:16px;line-height:16px;white-space:nowrap;font-size:11.5px;color:#f4f4ea;">List : Sample</div>
<svg class="p" style="left:714px;top:421px" width="9" height="8"><path d="M0.5,0.5 L8.5,7.5 M8.5,0.5 L0.5,7.5" stroke="#ffffff" stroke-width="1.6"/></svg>
<div class="p" style="left:57px;top:436px;width:670px;height:502.5px;background:#f4f4f4;border-left:1px solid #606060;border-top:2px solid #5e5e5e;border-right:2px solid #f4f4f4;border-bottom:2px solid #f4f4f4;box-sizing:border-box;"></div>
<div class="p" style="left:58px;top:438px;width:667px;height:24px;background:linear-gradient(#d2d2d2,#b0b0b0);border-bottom:1px solid #707070;border-right:1px solid #707070;box-sizing:border-box;"></div>
<div class="p" style="left:66px;top:443px;width:13px;height:13px;border:1px solid #3050c0;border-radius:2px;background:linear-gradient(#ffffff,#d8e0f0);box-sizing:border-box;"></div><div class="p" style="left:69px;top:449px;width:7px;height:2px;background:#2040c0;"></div><div class="p" style="left:71.5px;top:446px;width:2px;height:7px;background:#2040c0;"></div>
<div class="p" style="left:87px;top:443px;width:13px;height:13px;border:1px solid #3050c0;border-radius:2px;background:linear-gradient(#ffffff,#d8e0f0);box-sizing:border-box;"></div><div class="p" style="left:90px;top:449px;width:7px;height:2px;background:#2040c0;"></div>
<div class="p" style="left:109px;top:443px;width:1px;height:14px;background:#e8e8e8;border-left:1px solid #808080;"></div>
<div class="p" style="left:115px;top:444px;width:14px;height:11px;background:linear-gradient(#5a8ad8 0 2px,#f0f0f0 2px);border:1px solid #6a8ac8;box-sizing:border-box;"></div>
<svg class="p" style="left:120px;top:449px" width="11" height="9"><path d="M0.5,2.5 L5,2.5 L5,0.5 L10,4.5 L5,8.5 L5,6.5 L0.5,6.5 Z" fill="#60b040" stroke="#3a8a2a" stroke-width="0.8"/></svg>
<div class="p" style="left:136px;top:443px;width:1px;height:14px;background:#808080;"></div>
<div class="p" style="left:144px;top:442px;height:16px;line-height:16px;white-space:nowrap;font-size:11px;color:#101010;">Quick Filters:</div>
<svg class="p" style="left:218px;top:444px" width="15" height="12"><path d="M1,6 L5,10 L14,1" fill="none" stroke="#50b020" stroke-width="2.6"/></svg>
<div class="p" style="left:237px;top:442px;height:16px;line-height:16px;white-space:nowrap;font-size:11px;color:#101010;">ISO14443</div>
<svg class="p" style="left:292px;top:448px" width="6" height="4"><path d="M0,0 L6,0 L3,3 Z" fill="#606060"/></svg>
<div class="p" style="left:304px;top:443px;width:1px;height:14px;background:#808080;"></div>
<div class="p" style="left:311px;top:442px;height:16px;line-height:16px;white-space:nowrap;font-size:11px;color:#101010;">Columns :</div>
<div class="p" style="left:370px;top:442px;height:16px;line-height:16px;white-space:nowrap;font-size:11px;color:#101010;">Hide</div>
<svg class="p" style="left:401px;top:448px" width="6" height="4"><path d="M0,0 L6,0 L3,3 Z" fill="#606060"/></svg>
<div class="p" style="left:414px;top:442px;height:16px;line-height:16px;white-space:nowrap;font-size:11px;color:#101010;">Best Fit</div>
<div class="p" style="left:58px;top:462px;width:650px;height:448px;background:#ffffff;"></div>
<div class="p" style="left:62px;top:485px;width:26px;height:425px;background:#eeeeee;"></div>
<div class="p" style="left:88px;top:485px;width:80px;height:425px;background:#ffffff;"></div>
<div class="p" style="left:168px;top:485px;width:163px;height:425px;background:#eeeeee;"></div>
<div class="p" style="left:331px;top:485px;width:109px;height:425px;background:#ffffff;"></div>
<div class="p" style="left:440px;top:485px;width:148px;height:425px;background:#eeeeee;"></div>
<div class="p" style="left:588px;top:485px;width:120px;height:425px;background:#ffffff;"></div>
<div class="p" style="left:58px;top:462px;width:650px;height:24px;background:linear-gradient(#ffffff 0 10px,#f1f2f4 10px);border-bottom:2px solid #dcdcdc;box-sizing:border-box;"></div>
<div class="p" style="left:87px;top:463px;width:1px;height:20px;background:#e4e4e4;"></div>
<div class="p" style="left:167px;top:463px;width:1px;height:20px;background:#e4e4e4;"></div>
<div class="p" style="left:330px;top:463px;width:1px;height:20px;background:#e4e4e4;"></div>
<div class="p" style="left:439px;top:463px;width:1px;height:20px;background:#e4e4e4;"></div>
<div class="p" style="left:587px;top:463px;width:1px;height:20px;background:#e4e4e4;"></div>
<div class="p" style="left:64px;top:466px;height:16px;line-height:16px;white-space:nowrap;font-size:12px;color:#101010;">In...</div>
<div class="p" style="left:91px;top:466px;height:16px;line-height:16px;white-space:nowrap;font-size:12px;color:#101010;">Time: s.ms....</div>
<div class="p" style="left:171px;top:466px;height:16px;line-height:16px;white-space:nowrap;font-size:12px;color:#101010;">Record</div>
<div class="p" style="left:334px;top:466px;height:16px;line-height:16px;white-space:nowrap;font-size:12px;color:#101010;">Processing</div>
<div class="p" style="left:443px;top:466px;height:16px;line-height:16px;white-space:nowrap;font-size:12px;color:#101010;">Data</div>
<div class="p" style="left:591px;top:466px;height:16px;line-height:16px;white-space:nowrap;font-size:12px;color:#101010;">Info</div>
<div class="p" style="left:0;top:0;width:708px;height:909px;clip-path:inset(486px 0 0 58px);"><div class="p" style="left:58px;top:486px;width:4px;height:19px;background:#5a8cf0;"></div><div class="p" style="left:62px;top:504px;width:646px;height:1px;background:#ecebe0;"></div><div class="p" style="left:74.5px;top:486px;height:17px;line-height:17px;white-space:nowrap;font-size:11.5px;letter-spacing:0.45px;color:#1c9eb4;">0</div><div class="p" style="left:100px;top:486px;height:17px;line-height:17px;white-space:nowrap;font-size:11.5px;letter-spacing:0.45px;color:#1c9eb4;">0.198.39...</div><div class="p" style="left:171px;top:490px;width:11px;height:11px;border:1px solid #9a9ab0;box-sizing:border-box;background:#f8f8f8"></div><div class="p" style="left:174px;top:495px;width:5px;height:1px;background:#8888a0;"></div><div class="p" style="left:176px;top:493px;width:1px;height:5px;background:#8888a0;"></div><div class="p" style="left:213px;top:486px;height:17px;line-height:17px;white-space:nowrap;font-size:11.5px;letter-spacing:0.45px;color:#1c9eb4;">WUPB</div><div class="p" style="left:343px;top:486px;height:17px;line-height:17px;white-space:nowrap;font-size:11.5px;letter-spacing:0.45px;color:#1c9eb4;">0(fc)</div><div class="p" style="left:452px;top:486px;height:17px;line-height:17px;white-space:nowrap;font-size:11.5px;letter-spacing:0.45px;color:#1c9eb4;">05 00 08 39 73</div><div class="p" style="left:600px;top:486px;height:17px;line-height:17px;white-space:nowrap;font-size:11.5px;letter-spacing:0.45px;color:#1c9eb4;">Nb Slots: 1</div><div class="p" style="left:58px;top:505px;width:4px;height:19px;background:#5a8cf0;"></div><div class="p" style="left:62px;top:523px;width:646px;height:1px;background:#ecebe0;"></div><div class="p" style="left:74.5px;top:505px;height:17px;line-height:17px;white-space:nowrap;font-size:11.5px;letter-spacing:0.45px;color:#bc5e08;">7</div><div class="p" style="left:100px;top:505px;height:17px;line-height:17px;white-space:nowrap;font-size:11.5px;letter-spacing:0.45px;color:#bc5e08;">0.199.29...</div><div class="p" style="left:171px;top:509px;width:11px;height:11px;border:1px solid #9a9ab0;box-sizing:border-box;background:#f8f8f8"></div><div class="p" style="left:174px;top:514px;width:5px;height:1px;background:#8888a0;"></div><div class="p" style="left:176px;top:512px;width:1px;height:5px;background:#8888a0;"></div><div class="p" style="left:213px;top:505px;height:17px;line-height:17px;white-space:nowrap;font-size:11.5px;letter-spacing:0.45px;color:#bc5e08;">ATQB</div><div class="p" style="left:343px;top:505px;height:17px;line-height:17px;white-space:nowrap;font-size:11.5px;letter-spacing:0.45px;color:#bc5e08;">2909(fc)</div><div class="p" style="left:452px;top:505px;height:17px;line-height:17px;white-space:nowrap;font-size:11.5px;letter-spacing:0.45px;color:#bc5e08;">50 D6 0E 71 90 E1 F...</div><div class="p" style="left:600px;top:505px;height:17px;line-height:17px;white-space:nowrap;font-size:11.5px;letter-spacing:0.45px;color:#bc5e08;">PUPI:D60E7190</div><div class="p" style="left:58px;top:524px;width:4px;height:19px;background:#5a8cf0;"></div><div class="p" style="left:62px;top:542px;width:646px;height:1px;background:#ecebe0;"></div><div class="p" style="left:74.5px;top:524px;height:17px;line-height:17px;white-space:nowrap;font-size:11.5px;letter-spacing:0.45px;color:#1c9eb4;">2.</div><div class="p" style="left:100px;top:524px;height:17px;line-height:17px;white-space:nowrap;font-size:11.5px;letter-spacing:0.45px;color:#1c9eb4;">0.406.40...</div><div class="p" style="left:171px;top:528px;width:11px;height:11px;border:1px solid #9a9ab0;box-sizing:border-box;background:#f8f8f8"></div><div class="p" style="left:174px;top:533px;width:5px;height:1px;background:#8888a0;"></div><div class="p" style="left:176px;top:531px;width:1px;height:5px;background:#8888a0;"></div><div class="p" style="left:213px;top:524px;height:17px;line-height:17px;white-space:nowrap;font-size:11.5px;letter-spacing:0.45px;color:#1c9eb4;">WUPB</div><div class="p" style="left:343px;top:524px;height:17px;line-height:17px;white-space:nowrap;font-size:11.5px;letter-spacing:0.45px;color:#1c9eb4;">2785425(fc)</div><div class="p" style="left:452px;top:524px;height:17px;line-height:17px;white-space:nowrap;font-size:11.5px;letter-spacing:0.45px;color:#1c9eb4;">05 00 08 39 73</div><div class="p" style="left:600px;top:524px;height:17px;line-height:17px;white-space:nowrap;font-size:11.5px;letter-spacing:0.45px;color:#1c9eb4;">Nb Slots: 1</div><div class="p" style="left:58px;top:543px;width:650px;height:19px;background:#f7dcdc;"></div><div class="p" style="left:62px;top:561px;width:646px;height:1px;background:#ecebe0;"></div><div class="p" style="left:74.5px;top:543px;height:17px;line-height:17px;white-space:nowrap;font-size:11.5px;letter-spacing:0.45px;color:#101010;">3.</div><div class="p" style="left:100px;top:543px;height:17px;line-height:17px;white-space:nowrap;font-size:11.5px;letter-spacing:0.45px;color:#101010;">0.407.29...</div><div class="p" style="left:171px;top:547px;width:11px;height:11px;border:1px solid #9a9ab0;box-sizing:border-box;background:transparent"></div><div class="p" style="left:174px;top:552px;width:5px;height:1px;background:#8888a0;"></div><div class="p" style="left:213px;top:543px;height:17px;line-height:17px;white-space:nowrap;font-size:11.5px;letter-spacing:0.45px;color:#101010;">ATQB</div><div class="p" style="left:343px;top:543px;height:17px;line-height:17px;white-space:nowrap;font-size:11.5px;letter-spacing:0.45px;color:#101010;">2908(fc)</div><div class="p" style="left:452px;top:543px;height:17px;line-height:17px;white-space:nowrap;font-size:11.5px;letter-spacing:0.45px;color:#101010;">50 D6 0E 71 90 E1 F...</div><div class="p" style="left:600px;top:543px;height:17px;line-height:17px;white-space:nowrap;font-size:11.5px;letter-spacing:0.45px;color:#101010;">PUPI:D60E7190</div><div class="p" style="left:58px;top:562px;width:4px;height:19px;background:#5a8cf0;"></div><div class="p" style="left:62px;top:580px;width:646px;height:1px;background:#ecebe0;"></div><div class="p" style="left:74.5px;top:562px;height:17px;line-height:17px;white-space:nowrap;font-size:11.5px;letter-spacing:0.45px;color:#bc5e08;">3.</div><div class="p" style="left:100px;top:562px;height:17px;line-height:17px;white-space:nowrap;font-size:11.5px;letter-spacing:0.45px;color:#bc5e08;">0.407.56...</div><div class="p" style="left:217px;top:562px;height:17px;line-height:17px;white-space:nowrap;font-size:11.5px;letter-spacing:0.45px;color:#bc5e08;">ATQB</div><div class="p" style="left:58px;top:581px;width:4px;height:19px;background:#5a8cf0;"></div><div class="p" style="left:62px;top:599px;width:646px;height:1px;background:#ecebe0;"></div><div class="p" style="left:74.5px;top:581px;height:17px;line-height:17px;white-space:nowrap;font-size:11.5px;letter-spacing:0.45px;color:#bc5e08;">3.</div><div class="p" style="left:100px;top:581px;height:17px;line-height:17px;white-space:nowrap;font-size:11.5px;letter-spacing:0.45px;color:#bc5e08;">0.407.65...</div><div class="p" style="left:191px;top:585px;width:11px;height:11px;border:1px solid #9a9ab0;box-sizing:border-box;background:#f8f8f8"></div><div class="p" style="left:194px;top:590px;width:5px;height:1px;background:#8888a0;"></div><div class="p" style="left:196px;top:588px;width:1px;height:5px;background:#8888a0;"></div><div class="p" style="left:233px;top:581px;height:17px;line-height:17px;white-space:nowrap;font-size:11.5px;letter-spacing:0.45px;color:#bc5e08;">PUPI</div><div class="p" style="left:452px;top:581px;height:17px;line-height:17px;white-space:nowrap;font-size:11.5px;letter-spacing:0.45px;color:#bc5e08;">00</div><div class="p" style="left:58px;top:600px;width:4px;height:19px;background:#b8cdf4;"></div><div class="p" style="left:62px;top:618px;width:646px;height:1px;background:#ecebe0;"></div><div class="p" style="left:74.5px;top:600px;height:17px;line-height:17px;white-space:nowrap;font-size:11.5px;letter-spacing:0.45px;color:#bc5e08;">4.</div><div class="p" style="left:100px;top:600px;height:17px;line-height:17px;white-space:nowrap;font-size:11.5px;letter-spacing:0.45px;color:#bc5e08;">0.408.03...</div><div class="p" style="left:191px;top:604px;width:11px;height:11px;border:1px solid #9a9ab0;box-sizing:border-box;background:#f8f8f8"></div><div class="p" style="left:194px;top:609px;width:5px;height:1px;background:#8888a0;"></div><div class="p" style="left:196px;top:607px;width:1px;height:5px;background:#8888a0;"></div><div class="p" style="left:233px;top:600px;height:17px;line-height:17px;white-space:nowrap;font-size:11.5px;letter-spacing:0.45px;color:#bc5e08;">Application Data</div><div class="p" style="left:452px;top:600px;height:17px;line-height:17px;white-space:nowrap;font-size:11.5px;letter-spacing:0.45px;color:#bc5e08;">00</div><div class="p" style="left:58px;top:619px;width:650px;height:19px;background:#eaa7a7;"></div><div class="p" style="left:62px;top:637px;width:646px;height:1px;background:#ecebe0;"></div><div class="p" style="left:74.5px;top:619px;height:17px;line-height:17px;white-space:nowrap;font-size:11.5px;letter-spacing:0.45px;color:#101010;">4.</div><div class="p" style="left:100px;top:619px;height:17px;line-height:17px;white-space:nowrap;font-size:11.5px;letter-spacing:0.45px;color:#101010;">0.408.41...</div><div class="p" style="left:191px;top:623px;width:11px;height:11px;border:1px solid #9a9ab0;box-sizing:border-box;background:transparent"></div><div class="p" style="left:194px;top:628px;width:5px;height:1px;background:#8888a0;"></div><div class="p" style="left:233px;top:619px;height:17px;line-height:17px;white-space:nowrap;font-size:11.5px;letter-spacing:0.45px;color:#101010;">Protocol Info</div><div class="p" style="left:452px;top:619px;height:17px;line-height:17px;white-space:nowrap;font-size:11.5px;letter-spacing:0.45px;color:#101010;">00</div><div class="p" style="left:58px;top:638px;width:650px;height:19px;background:#e07474;"></div><div class="p" style="left:62px;top:656px;width:646px;height:1px;background:#ecebe0;"></div><div class="p" style="left:74.5px;top:638px;height:17px;line-height:17px;white-space:nowrap;font-size:11.5px;letter-spacing:0.45px;color:#101010;">4.</div><div class="p" style="left:100px;top:638px;height:17px;line-height:17px;white-space:nowrap;font-size:11.5px;letter-spacing:0.45px;color:#101010;">0.408.41...</div><div class="p" style="left:237px;top:638px;height:17px;line-height:17px;white-space:nowrap;font-size:11.5px;letter-spacing:0.45px;color:#101010;">INFO1</div><div class="p" style="left:452px;top:638px;height:17px;line-height:17px;white-space:nowrap;font-size:11.5px;letter-spacing:0.45px;color:#101010;">33</div><div class="p" style="left:58px;top:657px;width:4px;height:19px;background:#5a8cf0;"></div><div class="p" style="left:62px;top:675px;width:646px;height:1px;background:#ecebe0;"></div><div class="p" style="left:74.5px;top:657px;height:17px;line-height:17px;white-space:nowrap;font-size:11.5px;letter-spacing:0.45px;color:#bc5e08;">4.</div><div class="p" style="left:100px;top:657px;height:17px;line-height:17px;white-space:nowrap;font-size:11.5px;letter-spacing:0.45px;color:#bc5e08;">0.408.50...</div><div class="p" style="left:237px;top:657px;height:17px;line-height:17px;white-space:nowrap;font-size:11.5px;letter-spacing:0.45px;color:#bc5e08;">INFO2</div><div class="p" style="left:452px;top:657px;height:17px;line-height:17px;white-space:nowrap;font-size:11.5px;letter-spacing:0.45px;color:#bc5e08;">81</div><div class="p" style="left:58px;top:676px;width:4px;height:19px;background:#5a8cf0;"></div><div class="p" style="left:62px;top:694px;width:646px;height:1px;background:#ecebe0;"></div><div class="p" style="left:74.5px;top:676px;height:17px;line-height:17px;white-space:nowrap;font-size:11.5px;letter-spacing:0.45px;color:#bc5e08;">5.</div><div class="p" style="left:100px;top:676px;height:17px;line-height:17px;white-space:nowrap;font-size:11.5px;letter-spacing:0.45px;color:#bc5e08;">0.408.60...</div><div class="p" style="left:237px;top:676px;height:17px;line-height:17px;white-space:nowrap;font-size:11.5px;letter-spacing:0.45px;color:#bc5e08;">INFO3</div><div class="p" style="left:452px;top:676px;height:17px;line-height:17px;white-space:nowrap;font-size:11.5px;letter-spacing:0.45px;color:#bc5e08;">97</div><div class="p" style="left:58px;top:695px;width:4px;height:19px;background:#5a8cf0;"></div><div class="p" style="left:62px;top:713px;width:646px;height:1px;background:#ecebe0;"></div><div class="p" style="left:74.5px;top:695px;height:17px;line-height:17px;white-space:nowrap;font-size:11.5px;letter-spacing:0.45px;color:#bc5e08;">5.</div><div class="p" style="left:100px;top:695px;height:17px;line-height:17px;white-space:nowrap;font-size:11.5px;letter-spacing:0.45px;color:#bc5e08;">0.408.69...</div><div class="p" style="left:191px;top:699px;width:11px;height:11px;border:1px solid #9a9ab0;box-sizing:border-box;background:#f8f8f8"></div><div class="p" style="left:194px;top:704px;width:5px;height:1px;background:#8888a0;"></div><div class="p" style="left:196px;top:702px;width:1px;height:5px;background:#8888a0;"></div><div class="p" style="left:233px;top:695px;height:17px;line-height:17px;white-space:nowrap;font-size:11.5px;letter-spacing:0.45px;color:#bc5e08;">CRC_B</div><div class="p" style="left:452px;top:695px;height:17px;line-height:17px;white-space:nowrap;font-size:11.5px;letter-spacing:0.45px;color:#bc5e08;">00</div><div class="p" style="left:58px;top:714px;width:4px;height:19px;background:#5a8cf0;"></div><div class="p" style="left:62px;top:732px;width:646px;height:1px;background:#ecebe0;"></div><div class="p" style="left:74.5px;top:714px;height:17px;line-height:17px;white-space:nowrap;font-size:11.5px;letter-spacing:0.45px;color:#1c9eb4;">5.</div><div class="p" style="left:100px;top:714px;height:17px;line-height:17px;white-space:nowrap;font-size:11.5px;letter-spacing:0.45px;color:#1c9eb4;">0.614.42...</div><div class="p" style="left:171px;top:718px;width:11px;height:11px;border:1px solid #9a9ab0;box-sizing:border-box;background:#f8f8f8"></div><div class="p" style="left:174px;top:723px;width:5px;height:1px;background:#8888a0;"></div><div class="p" style="left:176px;top:721px;width:1px;height:5px;background:#8888a0;"></div><div class="p" style="left:213px;top:714px;height:17px;line-height:17px;white-space:nowrap;font-size:11.5px;letter-spacing:0.45px;color:#1c9eb4;">WUPB</div><div class="p" style="left:343px;top:714px;height:17px;line-height:17px;white-space:nowrap;font-size:11.5px;letter-spacing:0.45px;color:#1c9eb4;">2785553(fc)</div><div class="p" style="left:452px;top:714px;height:17px;line-height:17px;white-space:nowrap;font-size:11.5px;letter-spacing:0.45px;color:#1c9eb4;">05 00 08 39 73</div><div class="p" style="left:600px;top:714px;height:17px;line-height:17px;white-space:nowrap;font-size:11.5px;letter-spacing:0.45px;color:#1c9eb4;">Nb Slots: 1</div><div class="p" style="left:58px;top:733px;width:4px;height:19px;background:#5a8cf0;"></div><div class="p" style="left:62px;top:751px;width:646px;height:1px;background:#ecebe0;"></div><div class="p" style="left:74.5px;top:733px;height:17px;line-height:17px;white-space:nowrap;font-size:11.5px;letter-spacing:0.45px;color:#bc5e08;">6.</div><div class="p" style="left:100px;top:733px;height:17px;line-height:17px;white-space:nowrap;font-size:11.5px;letter-spacing:0.45px;color:#bc5e08;">0.615.31...</div><div class="p" style="left:171px;top:737px;width:11px;height:11px;border:1px solid #9a9ab0;box-sizing:border-box;background:#f8f8f8"></div><div class="p" style="left:174px;top:742px;width:5px;height:1px;background:#8888a0;"></div><div class="p" style="left:176px;top:740px;width:1px;height:5px;background:#8888a0;"></div><div class="p" style="left:213px;top:733px;height:17px;line-height:17px;white-space:nowrap;font-size:11.5px;letter-spacing:0.45px;color:#bc5e08;">ATQB</div><div class="p" style="left:343px;top:733px;height:17px;line-height:17px;white-space:nowrap;font-size:11.5px;letter-spacing:0.45px;color:#bc5e08;">2908(fc)</div><div class="p" style="left:452px;top:733px;height:17px;line-height:17px;white-space:nowrap;font-size:11.5px;letter-spacing:0.45px;color:#bc5e08;">50 D6 0E 71 90 E1 F...</div><div class="p" style="left:600px;top:733px;height:17px;line-height:17px;white-space:nowrap;font-size:11.5px;letter-spacing:0.45px;color:#bc5e08;">PUPI:D60E7190</div><div class="p" style="left:58px;top:752px;width:4px;height:19px;background:#5a8cf0;"></div><div class="p" style="left:62px;top:770px;width:646px;height:1px;background:#ecebe0;"></div><div class="p" style="left:74.5px;top:752px;height:17px;line-height:17px;white-space:nowrap;font-size:11.5px;letter-spacing:0.45px;color:#1c9eb4;">8.</div><div class="p" style="left:100px;top:752px;height:17px;line-height:17px;white-space:nowrap;font-size:11.5px;letter-spacing:0.45px;color:#1c9eb4;">0.822.42...</div><div class="p" style="left:171px;top:756px;width:11px;height:11px;border:1px solid #9a9ab0;box-sizing:border-box;background:#f8f8f8"></div><div class="p" style="left:174px;top:761px;width:5px;height:1px;background:#8888a0;"></div><div class="p" style="left:176px;top:759px;width:1px;height:5px;background:#8888a0;"></div><div class="p" style="left:213px;top:752px;height:17px;line-height:17px;white-space:nowrap;font-size:11.5px;letter-spacing:0.45px;color:#1c9eb4;">WUPB</div><div class="p" style="left:343px;top:752px;height:17px;line-height:17px;white-space:nowrap;font-size:11.5px;letter-spacing:0.45px;color:#1c9eb4;">2785425(fc)</div><div class="p" style="left:452px;top:752px;height:17px;line-height:17px;white-space:nowrap;font-size:11.5px;letter-spacing:0.45px;color:#1c9eb4;">05 00 08 39 73</div><div class="p" style="left:600px;top:752px;height:17px;line-height:17px;white-space:nowrap;font-size:11.5px;letter-spacing:0.45px;color:#1c9eb4;">Nb Slots: 1</div><div class="p" style="left:58px;top:771px;width:4px;height:19px;background:#5a8cf0;"></div><div class="p" style="left:62px;top:789px;width:646px;height:1px;background:#ecebe0;"></div><div class="p" style="left:74.5px;top:771px;height:17px;line-height:17px;white-space:nowrap;font-size:11.5px;letter-spacing:0.45px;color:#bc5e08;">8.</div><div class="p" style="left:100px;top:771px;height:17px;line-height:17px;white-space:nowrap;font-size:11.5px;letter-spacing:0.45px;color:#bc5e08;">0.823.32...</div><div class="p" style="left:171px;top:775px;width:11px;height:11px;border:1px solid #9a9ab0;box-sizing:border-box;background:#f8f8f8"></div><div class="p" style="left:174px;top:780px;width:5px;height:1px;background:#8888a0;"></div><div class="p" style="left:176px;top:778px;width:1px;height:5px;background:#8888a0;"></div><div class="p" style="left:213px;top:771px;height:17px;line-height:17px;white-space:nowrap;font-size:11.5px;letter-spacing:0.45px;color:#bc5e08;">ATQB</div><div class="p" style="left:343px;top:771px;height:17px;line-height:17px;white-space:nowrap;font-size:11.5px;letter-spacing:0.45px;color:#bc5e08;">2909(fc)</div><div class="p" style="left:452px;top:771px;height:17px;line-height:17px;white-space:nowrap;font-size:11.5px;letter-spacing:0.45px;color:#bc5e08;">50 D6 0E 71 90 E1 F...</div><div class="p" style="left:600px;top:771px;height:17px;line-height:17px;white-space:nowrap;font-size:11.5px;letter-spacing:0.45px;color:#bc5e08;">PUPI:D60E7190</div><div class="p" style="left:58px;top:790px;width:4px;height:19px;background:#5a8cf0;"></div><div class="p" style="left:62px;top:808px;width:646px;height:1px;background:#ecebe0;"></div><div class="p" style="left:74.5px;top:790px;height:17px;line-height:17px;white-space:nowrap;font-size:11.5px;letter-spacing:0.45px;color:#1c9eb4;">1.</div><div class="p" style="left:100px;top:790px;height:17px;line-height:17px;white-space:nowrap;font-size:11.5px;letter-spacing:0.45px;color:#1c9eb4;">1.030.43...</div><div class="p" style="left:171px;top:794px;width:11px;height:11px;border:1px solid #9a9ab0;box-sizing:border-box;background:#f8f8f8"></div><div class="p" style="left:174px;top:799px;width:5px;height:1px;background:#8888a0;"></div><div class="p" style="left:176px;top:797px;width:1px;height:5px;background:#8888a0;"></div><div class="p" style="left:213px;top:790px;height:17px;line-height:17px;white-space:nowrap;font-size:11.5px;letter-spacing:0.45px;color:#1c9eb4;">WUPB</div><div class="p" style="left:343px;top:790px;height:17px;line-height:17px;white-space:nowrap;font-size:11.5px;letter-spacing:0.45px;color:#1c9eb4;">2785424(fc)</div><div class="p" style="left:452px;top:790px;height:17px;line-height:17px;white-space:nowrap;font-size:11.5px;letter-spacing:0.45px;color:#1c9eb4;">05 00 08 39 73</div><div class="p" style="left:600px;top:790px;height:17px;line-height:17px;white-space:nowrap;font-size:11.5px;letter-spacing:0.45px;color:#1c9eb4;">Nb Slots: 1</div><div class="p" style="left:58px;top:809px;width:4px;height:19px;background:#5a8cf0;"></div><div class="p" style="left:62px;top:827px;width:646px;height:1px;background:#ecebe0;"></div><div class="p" style="left:74.5px;top:809px;height:17px;line-height:17px;white-space:nowrap;font-size:11.5px;letter-spacing:0.45px;color:#bc5e08;">1.</div><div class="p" style="left:100px;top:809px;height:17px;line-height:17px;white-space:nowrap;font-size:11.5px;letter-spacing:0.45px;color:#bc5e08;">1.031.33...</div><div class="p" style="left:171px;top:813px;width:11px;height:11px;border:1px solid #9a9ab0;box-sizing:border-box;background:#f8f8f8"></div><div class="p" style="left:174px;top:818px;width:5px;height:1px;background:#8888a0;"></div><div class="p" style="left:176px;top:816px;width:1px;height:5px;background:#8888a0;"></div><div class="p" style="left:213px;top:809px;height:17px;line-height:17px;white-space:nowrap;font-size:11.5px;letter-spacing:0.45px;color:#bc5e08;">ATQB</div><div class="p" style="left:343px;top:809px;height:17px;line-height:17px;white-space:nowrap;font-size:11.5px;letter-spacing:0.45px;color:#bc5e08;">2908(fc)</div><div class="p" style="left:452px;top:809px;height:17px;line-height:17px;white-space:nowrap;font-size:11.5px;letter-spacing:0.45px;color:#bc5e08;">50 D6 0E 71 90 E1 F...</div><div class="p" style="left:600px;top:809px;height:17px;line-height:17px;white-space:nowrap;font-size:11.5px;letter-spacing:0.45px;color:#bc5e08;">PUPI:D60E7190</div><div class="p" style="left:58px;top:828px;width:4px;height:19px;background:#5a8cf0;"></div><div class="p" style="left:62px;top:846px;width:646px;height:1px;background:#ecebe0;"></div><div class="p" style="left:74.5px;top:828px;height:17px;line-height:17px;white-space:nowrap;font-size:11.5px;letter-spacing:0.45px;color:#1c9eb4;">1.</div><div class="p" style="left:100px;top:828px;height:17px;line-height:17px;white-space:nowrap;font-size:11.5px;letter-spacing:0.45px;color:#1c9eb4;">1.238.44...</div><div class="p" style="left:171px;top:832px;width:11px;height:11px;border:1px solid #9a9ab0;box-sizing:border-box;background:#f8f8f8"></div><div class="p" style="left:174px;top:837px;width:5px;height:1px;background:#8888a0;"></div><div class="p" style="left:176px;top:835px;width:1px;height:5px;background:#8888a0;"></div><div class="p" style="left:213px;top:828px;height:17px;line-height:17px;white-space:nowrap;font-size:11.5px;letter-spacing:0.45px;color:#1c9eb4;">WUPB</div><div class="p" style="left:343px;top:828px;height:17px;line-height:17px;white-space:nowrap;font-size:11.5px;letter-spacing:0.45px;color:#1c9eb4;">2785425(fc)</div><div class="p" style="left:452px;top:828px;height:17px;line-height:17px;white-space:nowrap;font-size:11.5px;letter-spacing:0.45px;color:#1c9eb4;">05 00 08 39 73</div><div class="p" style="left:600px;top:828px;height:17px;line-height:17px;white-space:nowrap;font-size:11.5px;letter-spacing:0.45px;color:#1c9eb4;">Nb Slots: 1</div><div class="p" style="left:58px;top:847px;width:4px;height:19px;background:#5a8cf0;"></div><div class="p" style="left:62px;top:865px;width:646px;height:1px;background:#ecebe0;"></div><div class="p" style="left:74.5px;top:847px;height:17px;line-height:17px;white-space:nowrap;font-size:11.5px;letter-spacing:0.45px;color:#bc5e08;">1.</div><div class="p" style="left:100px;top:847px;height:17px;line-height:17px;white-space:nowrap;font-size:11.5px;letter-spacing:0.45px;color:#bc5e08;">1.239.33...</div><div class="p" style="left:171px;top:851px;width:11px;height:11px;border:1px solid #9a9ab0;box-sizing:border-box;background:#f8f8f8"></div><div class="p" style="left:174px;top:856px;width:5px;height:1px;background:#8888a0;"></div><div class="p" style="left:176px;top:854px;width:1px;height:5px;background:#8888a0;"></div><div class="p" style="left:213px;top:847px;height:17px;line-height:17px;white-space:nowrap;font-size:11.5px;letter-spacing:0.45px;color:#bc5e08;">ATQB</div><div class="p" style="left:343px;top:847px;height:17px;line-height:17px;white-space:nowrap;font-size:11.5px;letter-spacing:0.45px;color:#bc5e08;">2908(fc)</div><div class="p" style="left:452px;top:847px;height:17px;line-height:17px;white-space:nowrap;font-size:11.5px;letter-spacing:0.45px;color:#bc5e08;">50 D6 0E 71 90 E1 F...</div><div class="p" style="left:600px;top:847px;height:17px;line-height:17px;white-space:nowrap;font-size:11.5px;letter-spacing:0.45px;color:#bc5e08;">PUPI:D60E7190</div><div class="p" style="left:58px;top:866px;width:4px;height:19px;background:#5a8cf0;"></div><div class="p" style="left:62px;top:884px;width:646px;height:1px;background:#ecebe0;"></div><div class="p" style="left:74.5px;top:866px;height:17px;line-height:17px;white-space:nowrap;font-size:11.5px;letter-spacing:0.45px;color:#1c9eb4;">1.</div><div class="p" style="left:100px;top:866px;height:17px;line-height:17px;white-space:nowrap;font-size:11.5px;letter-spacing:0.45px;color:#1c9eb4;">1.638.41...</div><div class="p" style="left:171px;top:870px;width:11px;height:11px;border:1px solid #9a9ab0;box-sizing:border-box;background:#f8f8f8"></div><div class="p" style="left:174px;top:875px;width:5px;height:1px;background:#8888a0;"></div><div class="p" style="left:176px;top:873px;width:1px;height:5px;background:#8888a0;"></div><div class="p" style="left:213px;top:866px;height:17px;line-height:17px;white-space:nowrap;font-size:11.5px;letter-spacing:0.45px;color:#1c9eb4;">WUPB</div><div class="p" style="left:343px;top:866px;height:17px;line-height:17px;white-space:nowrap;font-size:11.5px;letter-spacing:0.45px;color:#1c9eb4;">5388408(fc)</div><div class="p" style="left:452px;top:866px;height:17px;line-height:17px;white-space:nowrap;font-size:11.5px;letter-spacing:0.45px;color:#1c9eb4;">05 00 08 39 73</div><div class="p" style="left:600px;top:866px;height:17px;line-height:17px;white-space:nowrap;font-size:11.5px;letter-spacing:0.45px;color:#1c9eb4;">Nb Slots: 1</div><div class="p" style="left:58px;top:885px;width:4px;height:19px;background:#5a8cf0;"></div><div class="p" style="left:62px;top:903px;width:646px;height:1px;background:#ecebe0;"></div><div class="p" style="left:74.5px;top:885px;height:17px;line-height:17px;white-space:nowrap;font-size:11.5px;letter-spacing:0.45px;color:#bc5e08;">1.</div><div class="p" style="left:100px;top:885px;height:17px;line-height:17px;white-space:nowrap;font-size:11.5px;letter-spacing:0.45px;color:#bc5e08;">1.639.30...</div><div class="p" style="left:171px;top:889px;width:11px;height:11px;border:1px solid #9a9ab0;box-sizing:border-box;background:#f8f8f8"></div><div class="p" style="left:174px;top:894px;width:5px;height:1px;background:#8888a0;"></div><div class="p" style="left:176px;top:892px;width:1px;height:5px;background:#8888a0;"></div><div class="p" style="left:213px;top:885px;height:17px;line-height:17px;white-space:nowrap;font-size:11.5px;letter-spacing:0.45px;color:#bc5e08;">ATQB</div><div class="p" style="left:343px;top:885px;height:17px;line-height:17px;white-space:nowrap;font-size:11.5px;letter-spacing:0.45px;color:#bc5e08;">2908(fc)</div><div class="p" style="left:452px;top:885px;height:17px;line-height:17px;white-space:nowrap;font-size:11.5px;letter-spacing:0.45px;color:#bc5e08;">50 D6 0E 71 90 E1 F...</div><div class="p" style="left:600px;top:885px;height:17px;line-height:17px;white-space:nowrap;font-size:11.5px;letter-spacing:0.45px;color:#bc5e08;">PUPI:D60E7190</div><div class="p" style="left:58px;top:904px;width:4px;height:19px;background:#5a8cf0;"></div><div class="p" style="left:62px;top:922px;width:646px;height:1px;background:#ecebe0;"></div><div class="p" style="left:74.5px;top:904px;height:17px;line-height:17px;white-space:nowrap;font-size:11.5px;letter-spacing:0.45px;color:#1c9eb4;">1.</div><div class="p" style="left:100px;top:904px;height:17px;line-height:17px;white-space:nowrap;font-size:11.5px;letter-spacing:0.45px;color:#1c9eb4;">1.846.42...</div><div class="p" style="left:171px;top:908px;width:11px;height:11px;border:1px solid #9a9ab0;box-sizing:border-box;background:#f8f8f8"></div><div class="p" style="left:174px;top:913px;width:5px;height:1px;background:#8888a0;"></div><div class="p" style="left:176px;top:911px;width:1px;height:5px;background:#8888a0;"></div><div class="p" style="left:213px;top:904px;height:17px;line-height:17px;white-space:nowrap;font-size:11.5px;letter-spacing:0.45px;color:#1c9eb4;">WUPB</div><div class="p" style="left:343px;top:904px;height:17px;line-height:17px;white-space:nowrap;font-size:11.5px;letter-spacing:0.45px;color:#1c9eb4;">2785553(fc)</div><div class="p" style="left:452px;top:904px;height:17px;line-height:17px;white-space:nowrap;font-size:11.5px;letter-spacing:0.45px;color:#1c9eb4;">05 00 08 39 73</div><div class="p" style="left:600px;top:904px;height:17px;line-height:17px;white-space:nowrap;font-size:11.5px;letter-spacing:0.45px;color:#1c9eb4;">Nb Slots: 1</div></div>
<div class="p" style="left:708px;top:462px;width:17px;height:448px;background:#efefef;"></div><svg class="p" style="left:708px;top:462px" width="17" height="16"><path d="M4.5,11 L8.5,7 L12.5,11 Z" fill="#303030"/></svg><svg class="p" style="left:708px;top:894px" width="17" height="16"><path d="M4.5,6 L8.5,10 L12.5,6 Z" fill="#303030"/></svg><div class="p" style="left:709px;top:481px;width:14px;height:378px;background:linear-gradient(90deg,#f4f4f4,#e6e6e6 50%,#c8c8c8);border:1px solid #b8b8b8;border-radius:2px;box-sizing:border-box;"></div><div class="p" style="left:712px;top:666.0px;width:8px;height:1px;background:#6a6a6a;"></div><div class="p" style="left:712px;top:668.0px;width:8px;height:1px;background:#6a6a6a;"></div><div class="p" style="left:712px;top:670.0px;width:8px;height:1px;background:#6a6a6a;"></div><div class="p" style="left:712px;top:672.0px;width:8px;height:1px;background:#6a6a6a;"></div>
<div class="p" style="left:58px;top:909.5px;width:667px;height:27px;background:linear-gradient(#cfcfcf,#a8a8a8);border:1px solid #5a5a5a;border-left:none;box-sizing:border-box;"></div>
<div class="p" style="left:62px;top:913px;width:99px;height:21px;background:#c6c6c6;border:1px solid #9a9a9a;box-sizing:border-box;"></div>
<div class="p" style="left:65px;top:915px;height:17px;line-height:17px;white-space:nowrap;font-size:11px;color:#101010;letter-spacing:0.3px;">Hex Data</div>
<svg class="p" style="left:152px;top:922px" width="6" height="4"><path d="M0,0 L6,0 L3,3 Z" fill="#505050"/></svg>
<div class="p" style="left:164px;top:915px;height:17px;line-height:17px;white-space:nowrap;font-size:11px;color:#101010;letter-spacing:0.3px;">Search</div>
<div class="p" style="left:201px;top:913px;width:160px;height:21px;background:#c6c6c6;border:1px solid #9a9a9a;box-sizing:border-box;"></div>
<div class="p" style="left:205px;top:915px;height:17px;line-height:17px;white-space:nowrap;font-size:11px;color:#707070;letter-spacing:0.45px;">Click to find a pattern</div>
<svg class="p" style="left:350px;top:922px" width="6" height="4"><path d="M0,0 L6,0 L3,3 Z" fill="#505050"/></svg>
<svg class="p" style="left:364.5px;top:916px" width="16" height="16"><circle cx="8" cy="8" r="7" fill="#dce8f6" stroke="#4a8ad8" stroke-width="1.2"/><path d="M6,4.5 L10.5,8 L6,11.5 Z" fill="#3a70c8"/></svg>
<svg class="p" style="left:387.5px;top:916px" width="16" height="16"><circle cx="8" cy="8" r="7" fill="#dce8f6" stroke="#4a8ad8" stroke-width="1.2"/><path d="M10,4.5 L5.5,8 L10,11.5 Z" fill="#3a70c8"/></svg>
<div class="p" style="left:1175px;top:16px;width:223px;height:431px;background:#6a6a6a;border-top:1px solid #f0f0f0;border-left:1px solid #d8d8d8;border-right:2px solid #484848;box-sizing:border-box;"></div>
<div class="p" style="left:1181px;top:22px;height:16px;line-height:16px;white-space:nowrap;font-size:11.5px;color:#f4f4ea;letter-spacing:-0.1px;">Sequences : Sample</div>
<svg class="p" style="left:1382.5px;top:24.5px" width="9" height="8"><path d="M0.5,0.5 L8.5,7.5 M8.5,0.5 L0.5,7.5" stroke="#ffffff" stroke-width="1.6"/></svg>
<div class="p" style="left:1178px;top:39px;width:218px;height:407px;background:#e8e8e8;border-left:1px solid #5a5a5a;border-top:2px solid #5a5a5a;border-right:2px solid #cfcfcf;border-bottom:3px solid #cfcfcf;box-sizing:border-box;"></div>
<div class="p" style="left:1181px;top:41px;width:213px;height:26px;background:linear-gradient(#d2d2d2,#a6a6a6);border:1px solid #6a6a6a;border-top:none;box-sizing:border-box;"></div>
<div class="p" style="left:1189px;top:46px;height:16px;line-height:16px;white-space:nowrap;font-size:11px;color:#101010;">Columns</div>
<svg class="p" style="left:1241px;top:52px" width="6" height="4"><path d="M0,0 L6,0 L3,3 Z" fill="#606060"/></svg>
<div class="p" style="left:1180px;top:67px;width:197px;height:376px;background:#ffffff;"></div>
<div class="p" style="left:1180px;top:67px;width:197px;height:22px;background:linear-gradient(#ffffff 0 10px,#f1f2f4 10px);border-bottom:1px solid #dcdcdc;box-sizing:border-box;"></div>
<div class="p" style="left:1183px;top:69px;height:16px;line-height:16px;white-space:nowrap;font-size:11px;color:#101010;letter-spacing:0.1px;">ISO14443 - 16 frames</div>
<div class="p" style="left:1377px;top:67px;width:17px;height:376px;background:#efefef;"></div><svg class="p" style="left:1377px;top:67px" width="17" height="16"><path d="M4.5,11 L8.5,7 L12.5,11 Z" fill="#303030"/></svg><svg class="p" style="left:1377px;top:427px" width="17" height="16"><path d="M4.5,6 L8.5,10 L12.5,6 Z" fill="#303030"/></svg><div class="p" style="left:1378px;top:85px;width:14px;height:148px;background:linear-gradient(90deg,#f4f4f4,#e6e6e6 50%,#c8c8c8);border:1px solid #b8b8b8;border-radius:2px;box-sizing:border-box;"></div><div class="p" style="left:1381px;top:155.0px;width:8px;height:1px;background:#6a6a6a;"></div><div class="p" style="left:1381px;top:157.0px;width:8px;height:1px;background:#6a6a6a;"></div><div class="p" style="left:1381px;top:159.0px;width:8px;height:1px;background:#6a6a6a;"></div><div class="p" style="left:1381px;top:161.0px;width:8px;height:1px;background:#6a6a6a;"></div>
<svg class="p" style="left:1180px;top:88px" width="197" height="230"><line x1="98.5" y1="3" x2="98.5" y2="230" stroke="#b8b8b8" stroke-width="2" stroke-dasharray="5,3"/><rect x="67.5" y="10.5" width="62" height="33.5" rx="7" ry="7" fill="#ffffff" stroke="#101010" stroke-width="1"/><text x="98.5" y="30.75" fill="#30aac4" font-size="9.5" font-weight="bold" text-anchor="middle" font-family='"Liberation Sans", sans-serif'>1 - WUPB</text><rect x="70.5" y="60.5" width="56" height="33.5" rx="7" ry="7" fill="#b8ccf8" stroke="#101010" stroke-width="1"/><text x="98.5" y="80.75" fill="#b8641c" font-size="9.5" font-weight="bold" text-anchor="middle" font-family='"Liberation Sans", sans-serif'>2 - ATQB</text><rect x="67.5" y="110.5" width="62" height="33.5" rx="7" ry="7" fill="#ffffff" stroke="#101010" stroke-width="1"/><text x="98.5" y="130.75" fill="#30aac4" font-size="9.5" font-weight="bold" text-anchor="middle" font-family='"Liberation Sans", sans-serif'>3 - WUPB</text><rect x="70.5" y="160.5" width="56" height="33.5" rx="7" ry="7" fill="#ffffff" stroke="#101010" stroke-width="1"/><text x="98.5" y="180.75" fill="#b8641c" font-size="9.5" font-weight="bold" text-anchor="middle" font-family='"Liberation Sans", sans-serif'>4 - ATQB</text><rect x="67.5" y="210.5" width="62" height="33.5" rx="7" ry="7" fill="#ffffff" stroke="#101010" stroke-width="1"/></svg>
<div class="p" style="left:806px;top:308px;width:557px;height:525px;background:#6a6a6a;border-top:1px solid #4a4a4a;border-right:2px solid #4a4a4a;border-bottom:1px solid #6a6a6a;box-sizing:border-box;"></div>
<div class="p" style="left:810px;top:313px;height:16px;line-height:16px;white-space:nowrap;font-size:11.5px;color:#f4f4ea;letter-spacing:0.1px;">Description&nbsp; : Sample</div>
<svg class="p" style="left:1349.5px;top:315px" width="9" height="8"><path d="M0.5,0.5 L8.5,7.5 M8.5,0.5 L0.5,7.5" stroke="#ffffff" stroke-width="1.6"/></svg>
<div class="p" style="left:808px;top:330px;width:553px;height:502px;background:#e0e0e0;border-left:2px solid #c8c8c8;border-top:2px solid #5a5a5a;border-right:2px solid #d0d0d0;border-bottom:6px solid #e8e8e8;box-sizing:border-box;"></div>
<div class="p" style="left:810px;top:332.5px;width:550px;height:25px;background:linear-gradient(#d4d4d4,#a8a8a8);border:1px solid #6a6a6a;border-top:none;box-sizing:border-box;"></div>
<div class="p" style="left:811px;top:359px;width:531px;height:2px;background:#8a8a8a;"></div>
<svg class="p" style="left:817px;top:338px" width="16" height="15"><path d="M1,7.5 L7,1.5 L7,5 L15,5 L15,10 L7,10 L7,13.5 Z" fill="#9ad020" stroke="#4a9a10" stroke-width="1"/></svg>
<svg class="p" style="left:839px;top:338px" width="16" height="15"><path d="M15,7.5 L9,1.5 L9,5 L1,5 L1,10 L9,10 L9,13.5 Z" fill="#9ad020" stroke="#4a9a10" stroke-width="1"/></svg>
<svg class="p" style="left:861px;top:337px" width="16" height="16"><path d="M3,8 L3,15 L13,15 L13,8 Z" fill="#f4f4f4" stroke="#9aa4b8" stroke-width="0.8"/><path d="M1,8.5 L8,1.5 L15,8.5" fill="none" stroke="#c07020" stroke-width="1.6"/><rect x="6" y="9" width="4" height="6" fill="#d89030"/><circle cx="8" cy="6" r="1" fill="#2050c0"/></svg>
<svg class="p" style="left:883px;top:337px" width="16" height="16"><path d="M5,0.5 L11,0.5 L15.5,5 L15.5,11 L11,15.5 L5,15.5 L0.5,11 L0.5,5 Z" fill="#e04030" stroke="#c03020" stroke-width="0.8"/><path d="M5,5 L11,11 M11,5 L5,11" stroke="#ffffff" stroke-width="2.2"/></svg>
<svg class="p" style="left:905px;top:337px" width="16" height="16"><path d="M2,7 Q4,3 10,4 L10,1.5 L14.5,5 L10,8.5 L10,6 Q6,5.5 4,8 Z" fill="#9ad020" stroke="#4a9a10" stroke-width="0.8"/><path d="M14,9 Q12,13 6,12 L6,14.5 L1.5,11 L6,7.5 L6,10 Q10,10.5 12,8 Z" fill="#9ad020" stroke="#4a9a10" stroke-width="0.8"/></svg>
<div class="p" style="left:810px;top:357px;width:2px;height:469px;background:#9a9a9a;"></div>
<div class="p" style="left:812px;top:361px;width:529px;height:465px;background:#ffffff;"></div>
<div class="p" style="left:1341px;top:361px;width:17px;height:465px;background:#efefef;"></div><svg class="p" style="left:1341px;top:361px" width="17" height="16"><path d="M4.5,11 L8.5,7 L12.5,11 Z" fill="#303030"/></svg><svg class="p" style="left:1341px;top:810px" width="17" height="16"><path d="M4.5,6 L8.5,10 L12.5,6 Z" fill="#303030"/></svg><div class="p" style="left:1342px;top:378px;width:14px;height:168px;background:linear-gradient(90deg,#f4f4f4,#e6e6e6 50%,#c8c8c8);border:1px solid #b8b8b8;border-radius:2px;box-sizing:border-box;"></div><div class="p" style="left:1345px;top:458.0px;width:8px;height:1px;background:#6a6a6a;"></div><div class="p" style="left:1345px;top:460.0px;width:8px;height:1px;background:#6a6a6a;"></div><div class="p" style="left:1345px;top:462.0px;width:8px;height:1px;background:#6a6a6a;"></div><div class="p" style="left:1345px;top:464.0px;width:8px;height:1px;background:#6a6a6a;"></div>
<div class="p" style="left:0;top:0;width:1341px;height:826px;clip-path:inset(361px 0 0 812px);"><div class="p" style="left:819px;top:366px;height:24px;line-height:24px;white-space:nowrap;font-size:19px;font-weight:bold;letter-spacing:1.1px;color:#363e4a;">Protocol Info</div><div class="p" style="left:819px;top:395px;width:516px;height:2px;background:#5cb818;"></div><div class="p" style="left:833px;top:414px;width:74px;height:13px;background:#3399ff;"></div><div class="p" style="left:834px;top:413px;height:16px;line-height:16px;white-space:nowrap;font-size:12px;letter-spacing:0.7px;color:#101010;font-weight:bold;color:#ffffff;">Description</div><div class="p" style="left:833px;top:433px;width:492px;line-height:15px;text-align:justify;text-align-last:left;font-size:12px;letter-spacing:0.45px;color:#101010;">The Protocol Info field indicates the parameters supported by the PICC. It is formatted as detailed below:</div><div class="p" style="left:833px;top:472px;width:502px;height:52px;background:#e1e1e9;"></div><div class="p" style="left:833px;top:472px;width:502px;height:2px;background:#000;"></div><div class="p" style="left:833px;top:523px;width:502px;height:2px;background:#000;"></div><div class="p" style="left:833px;top:569px;width:502px;height:2px;background:#000;"></div><div class="p" style="left:833px;top:472px;width:2px;height:99px;background:#000;"></div><div class="p" style="left:930.5px;top:472px;width:2px;height:99px;background:#000;"></div><div class="p" style="left:1089px;top:472px;width:2px;height:99px;background:#000;"></div><div class="p" style="left:1222.5px;top:472px;width:2px;height:99px;background:#000;"></div><div class="p" style="left:1333px;top:472px;width:2px;height:99px;background:#000;"></div><div class="p" style="left:1013px;top:523px;width:2px;height:48px;background:#000;"></div><div class="p" style="left:1134px;top:523px;width:2px;height:48px;background:#000;"></div><div class="p" style="left:1178.5px;top:523px;width:2px;height:48px;background:#000;"></div><div class="p" style="left:1278.5px;top:523px;width:2px;height:48px;background:#000;"></div><div class="p" style="left:835px;top:494.5px;width:95px;text-align:center;line-height:13px;font-size:12px;letter-spacing:0.7px;color:#101010;font-weight:bold;">1<sup style="font-size:9px;vertical-align:5px;line-height:0">st</sup> byte</div><div class="p" style="left:932px;top:494.5px;width:157px;text-align:center;line-height:13px;font-size:12px;letter-spacing:0.7px;color:#101010;font-weight:bold;">2<sup style="font-size:9px;vertical-align:5px;line-height:0">nd</sup> byte</div><div class="p" style="left:1091px;top:494.5px;width:131px;text-align:center;line-height:13px;font-size:12px;letter-spacing:0.7px;color:#101010;font-weight:bold;">3<sup style="font-size:9px;vertical-align:5px;line-height:0">rd</sup> byte</div><div class="p" style="left:1224px;top:481.5px;width:109px;text-align:center;line-height:13px;font-size:12px;letter-spacing:0.55px;color:#101010;font-weight:bold;">4<sup style="font-size:9px;vertical-align:5px;line-height:0">th</sup> byte<br>(optional)<br>Extended ATQB</div><div class="p" style="left:835px;top:528.5px;width:95px;text-align:center;line-height:13px;font-size:12px;letter-spacing:0.45px;color:#101010;">Bit Rate<br>Capability<br>(8 bits)</div><div class="p" style="left:932px;top:528.5px;width:81px;text-align:center;line-height:13px;font-size:12px;letter-spacing:0.45px;color:#101010;">Max Frame<br>Size<br>(4 bits)</div><div class="p" style="left:1015px;top:528.5px;width:74px;text-align:center;line-height:13px;font-size:12px;letter-spacing:0.45px;color:#101010;">Protocol<br>Type<br>(4 bits)</div><div class="p" style="left:1091px;top:528.5px;width:43px;text-align:center;line-height:13px;font-size:12px;letter-spacing:0.45px;color:#101010;">FWI<br>(4<br>bits)</div><div class="p" style="left:1136px;top:528.5px;width:42px;text-align:center;line-height:13px;font-size:12px;letter-spacing:0.45px;color:#101010;">ADC<br>(2<br>bits)</div><div class="p" style="left:1180px;top:528.5px;width:42px;text-align:center;line-height:13px;font-size:12px;letter-spacing:0.45px;color:#101010;">FO<br>(2<br>bits)</div><div class="p" style="left:1224px;top:536.5px;width:54px;text-align:center;line-height:13px;font-size:12px;letter-spacing:0.45px;color:#101010;">SFGI<br>(4 bits)</div><div class="p" style="left:1280px;top:536.5px;width:53px;text-align:center;line-height:13px;font-size:12px;letter-spacing:0.45px;color:#101010;">RFU<br>(4 bits)</div><div class="p" style="left:833px;top:581px;height:16px;line-height:16px;white-space:nowrap;font-size:12px;letter-spacing:0.7px;color:#101010;font-weight:bold;">Decoding</div><div class="p" style="left:833px;top:608px;width:5px;height:5px;background:#000;border-radius:3px;"></div><div class="p" style="left:848px;top:603px;height:16px;line-height:16px;white-space:nowrap;font-size:12px;letter-spacing:0.57px;color:#101010;">1<sup style="font-size:9px;vertical-align:5px;line-height:0">st</sup> byte of <i>Protocol Info</i> is <span style="color:#3a66d6">0x33</span> (bit rate capability = 0x33)</div><div class="p" style="left:863px;top:630px;width:452px;height:21px;background:#e1e1e9;"></div><div class="p" style="left:863px;top:630px;width:452px;height:2px;background:#000;"></div><div class="p" style="left:863px;top:650px;width:452px;height:2px;background:#000;"></div><div class="p" style="left:863px;top:684px;width:452px;height:2px;background:#000;"></div><div class="p" style="left:863px;top:718px;width:452px;height:2px;background:#000;"></div><div class="p" style="left:863px;top:752px;width:452px;height:2px;background:#000;"></div><div class="p" style="left:863px;top:786px;width:452px;height:2px;background:#000;"></div><div class="p" style="left:863px;top:820px;width:452px;height:2px;background:#000;"></div><div class="p" style="left:863px;top:630px;width:2px;height:200px;background:#000;"></div><div class="p" style="left:887px;top:630px;width:2px;height:200px;background:#000;"></div><div class="p" style="left:911px;top:630px;width:2px;height:200px;background:#000;"></div><div class="p" style="left:935px;top:630px;width:2px;height:200px;background:#000;"></div><div class="p" style="left:959px;top:630px;width:2px;height:200px;background:#000;"></div><div class="p" style="left:983px;top:630px;width:2px;height:200px;background:#000;"></div><div class="p" style="left:1007px;top:630px;width:2px;height:200px;background:#000;"></div><div class="p" style="left:1031px;top:630px;width:2px;height:200px;background:#000;"></div><div class="p" style="left:1055.5px;top:630px;width:2px;height:200px;background:#000;"></div><div class="p" style="left:1313px;top:630px;width:2px;height:200px;background:#000;"></div><div class="p" style="left:865px;top:635.0px;width:22px;text-align:center;line-height:13px;font-size:12px;letter-spacing:0.2px;color:#101010;font-weight:bold;">b8</div><div class="p" style="left:889px;top:635.0px;width:22px;text-align:center;line-height:13px;font-size:12px;letter-spacing:0.2px;color:#101010;font-weight:bold;">b7</div><div class="p" style="left:913px;top:635.0px;width:22px;text-align:center;line-height:13px;font-size:12px;letter-spacing:0.2px;color:#101010;font-weight:bold;">b6</div><div class="p" style="left:937px;top:635.0px;width:22px;text-align:center;line-height:13px;font-size:12px;letter-spacing:0.2px;color:#101010;font-weight:bold;">b5</div><div class="p" style="left:961px;top:635.0px;width:22px;text-align:center;line-height:13px;font-size:12px;letter-spacing:0.2px;color:#101010;font-weight:bold;">b4</div><div class="p" style="left:985px;top:635.0px;width:22px;text-align:center;line-height:13px;font-size:12px;letter-spacing:0.2px;color:#101010;font-weight:bold;">b3</div><div class="p" style="left:1009px;top:635.0px;width:22px;text-align:center;line-height:13px;font-size:12px;letter-spacing:0.2px;color:#101010;font-weight:bold;">b2</div><div class="p" style="left:1033px;top:635.0px;width:22.5px;text-align:center;line-height:13px;font-size:12px;letter-spacing:0.2px;color:#101010;font-weight:bold;">b1</div><div class="p" style="left:1057px;top:635.0px;width:256px;text-align:center;line-height:13px;font-size:12px;letter-spacing:0.7px;color:#101010;font-weight:bold;">Meaning</div><div class="p" style="left:865px;top:663.0px;width:22px;text-align:center;line-height:13px;font-size:12px;letter-spacing:0.45px;color:#101010;color:#3a66d6;letter-spacing:0;font-size:11.5px;">0</div><div class="p" style="left:889px;top:663.0px;width:22px;text-align:center;line-height:13px;font-size:12px;letter-spacing:0.45px;color:#101010;color:#3a66d6;letter-spacing:0;font-size:11.5px;">x</div><div class="p" style="left:913px;top:663.0px;width:22px;text-align:center;line-height:13px;font-size:12px;letter-spacing:0.45px;color:#101010;color:#3a66d6;letter-spacing:0;font-size:11.5px;">x</div><div class="p" style="left:937px;top:663.0px;width:22px;text-align:center;line-height:13px;font-size:12px;letter-spacing:0.45px;color:#101010;color:#3a66d6;letter-spacing:0;font-size:11.5px;">x</div><div class="p" style="left:961px;top:663.0px;width:22px;text-align:center;line-height:13px;font-size:12px;letter-spacing:0.45px;color:#101010;color:#3a66d6;letter-spacing:0;font-size:11.5px;">0</div><div class="p" style="left:985px;top:663.0px;width:22px;text-align:center;line-height:13px;font-size:12px;letter-spacing:0.45px;color:#101010;color:#3a66d6;letter-spacing:0;font-size:11.5px;">x</div><div class="p" style="left:1009px;top:663.0px;width:22px;text-align:center;line-height:13px;font-size:12px;letter-spacing:0.45px;color:#101010;color:#3a66d6;letter-spacing:0;font-size:11.5px;">x</div><div class="p" style="left:1033px;top:663.0px;width:22.5px;text-align:center;line-height:13px;font-size:12px;letter-spacing:0.45px;color:#101010;color:#3a66d6;letter-spacing:0;font-size:11.5px;">x</div><div class="p" style="left:1060px;top:656.5px;line-height:13px;white-space:nowrap;font-size:12px;letter-spacing:0.45px;color:#101010;color:#3a66d6;">Different bit rates for each direction is<br>supported</div><div class="p" style="left:865px;top:697.0px;width:22px;text-align:center;line-height:13px;font-size:12px;letter-spacing:0.45px;color:#101010;color:#101010;letter-spacing:0;font-size:11.5px;">1</div><div class="p" style="left:889px;top:697.0px;width:22px;text-align:center;line-height:13px;font-size:12px;letter-spacing:0.45px;color:#101010;color:#101010;letter-spacing:0;font-size:11.5px;">x</div><div class="p" style="left:913px;top:697.0px;width:22px;text-align:center;line-height:13px;font-size:12px;letter-spacing:0.45px;color:#101010;color:#101010;letter-spacing:0;font-size:11.5px;">x</div><div class="p" style="left:937px;top:697.0px;width:22px;text-align:center;line-height:13px;font-size:12px;letter-spacing:0.45px;color:#101010;color:#101010;letter-spacing:0;font-size:11.5px;">x</div><div class="p" style="left:961px;top:697.0px;width:22px;text-align:center;line-height:13px;font-size:12px;letter-spacing:0.45px;color:#101010;color:#101010;letter-spacing:0;font-size:11.5px;">0</div><div class="p" style="left:985px;top:697.0px;width:22px;text-align:center;line-height:13px;font-size:12px;letter-spacing:0.45px;color:#101010;color:#101010;letter-spacing:0;font-size:11.5px;">x</div><div class="p" style="left:1009px;top:697.0px;width:22px;text-align:center;line-height:13px;font-size:12px;letter-spacing:0.45px;color:#101010;color:#101010;letter-spacing:0;font-size:11.5px;">x</div><div class="p" style="left:1033px;top:697.0px;width:22.5px;text-align:center;line-height:13px;font-size:12px;letter-spacing:0.45px;color:#101010;color:#101010;letter-spacing:0;font-size:11.5px;">x</div><div class="p" style="left:1060px;top:690.5px;line-height:13px;white-space:nowrap;font-size:12px;letter-spacing:0.45px;color:#101010;color:#101010;">Only the same bit rate for both direction is<br>supported</div><div class="p" style="left:865px;top:731.0px;width:22px;text-align:center;line-height:13px;font-size:12px;letter-spacing:0.45px;color:#101010;color:#101010;letter-spacing:0;font-size:11.5px;">x</div><div class="p" style="left:889px;top:731.0px;width:22px;text-align:center;line-height:13px;font-size:12px;letter-spacing:0.45px;color:#101010;color:#101010;letter-spacing:0;font-size:11.5px;">x</div><div class="p" style="left:913px;top:731.0px;width:22px;text-align:center;line-height:13px;font-size:12px;letter-spacing:0.45px;color:#101010;color:#101010;letter-spacing:0;font-size:11.5px;">x</div><div class="p" style="left:937px;top:731.0px;width:22px;text-align:center;line-height:13px;font-size:12px;letter-spacing:0.45px;color:#101010;color:#101010;letter-spacing:0;font-size:11.5px;">x</div><div class="p" style="left:961px;top:731.0px;width:22px;text-align:center;line-height:13px;font-size:12px;letter-spacing:0.45px;color:#101010;color:#101010;letter-spacing:0;font-size:11.5px;">0</div><div class="p" style="left:985px;top:731.0px;width:22px;text-align:center;line-height:13px;font-size:12px;letter-spacing:0.45px;color:#101010;color:#101010;letter-spacing:0;font-size:11.5px;">0</div><div class="p" style="left:1009px;top:731.0px;width:22px;text-align:center;line-height:13px;font-size:12px;letter-spacing:0.45px;color:#101010;color:#101010;letter-spacing:0;font-size:11.5px;">0</div><div class="p" style="left:1033px;top:731.0px;width:22.5px;text-align:center;line-height:13px;font-size:12px;letter-spacing:0.45px;color:#101010;color:#101010;letter-spacing:0;font-size:11.5px;">0</div><div class="p" style="left:1060px;top:724.5px;line-height:13px;white-space:nowrap;font-size:12px;letter-spacing:0.45px;color:#101010;color:#101010;">Only 106 kbps bit rate is supported from<br>PCD to PICC</div><div class="p" style="left:865px;top:765.0px;width:22px;text-align:center;line-height:13px;font-size:12px;letter-spacing:0.45px;color:#101010;color:#3a66d6;letter-spacing:0;font-size:11.5px;">x</div><div class="p" style="left:889px;top:765.0px;width:22px;text-align:center;line-height:13px;font-size:12px;letter-spacing:0.45px;color:#101010;color:#3a66d6;letter-spacing:0;font-size:11.5px;">x</div><div class="p" style="left:913px;top:765.0px;width:22px;text-align:center;line-height:13px;font-size:12px;letter-spacing:0.45px;color:#101010;color:#3a66d6;letter-spacing:0;font-size:11.5px;">x</div><div class="p" style="left:937px;top:765.0px;width:22px;text-align:center;line-height:13px;font-size:12px;letter-spacing:0.45px;color:#101010;color:#3a66d6;letter-spacing:0;font-size:11.5px;">x</div><div class="p" style="left:961px;top:765.0px;width:22px;text-align:center;line-height:13px;font-size:12px;letter-spacing:0.45px;color:#101010;color:#3a66d6;letter-spacing:0;font-size:11.5px;">0</div><div class="p" style="left:985px;top:765.0px;width:22px;text-align:center;line-height:13px;font-size:12px;letter-spacing:0.45px;color:#101010;color:#3a66d6;letter-spacing:0;font-size:11.5px;">x</div><div class="p" style="left:1009px;top:765.0px;width:22px;text-align:center;line-height:13px;font-size:12px;letter-spacing:0.45px;color:#101010;color:#3a66d6;letter-spacing:0;font-size:11.5px;">x</div><div class="p" style="left:1033px;top:765.0px;width:22.5px;text-align:center;line-height:13px;font-size:12px;letter-spacing:0.45px;color:#101010;color:#3a66d6;letter-spacing:0;font-size:11.5px;">1</div><div class="p" style="left:1060px;top:758.5px;line-height:13px;white-space:nowrap;font-size:12px;letter-spacing:0.45px;color:#101010;color:#3a66d6;">212 kbps bit rate is supported from PCD to<br>PICC</div><div class="p" style="left:865px;top:799.0px;width:22px;text-align:center;line-height:13px;font-size:12px;letter-spacing:0.45px;color:#101010;color:#3a66d6;letter-spacing:0;font-size:11.5px;">x</div><div class="p" style="left:889px;top:799.0px;width:22px;text-align:center;line-height:13px;font-size:12px;letter-spacing:0.45px;color:#101010;color:#3a66d6;letter-spacing:0;font-size:11.5px;">x</div><div class="p" style="left:913px;top:799.0px;width:22px;text-align:center;line-height:13px;font-size:12px;letter-spacing:0.45px;color:#101010;color:#3a66d6;letter-spacing:0;font-size:11.5px;">x</div><div class="p" style="left:937px;top:799.0px;width:22px;text-align:center;line-height:13px;font-size:12px;letter-spacing:0.45px;color:#101010;color:#3a66d6;letter-spacing:0;font-size:11.5px;">x</div><div class="p" style="left:961px;top:799.0px;width:22px;text-align:center;line-height:13px;font-size:12px;letter-spacing:0.45px;color:#101010;color:#3a66d6;letter-spacing:0;font-size:11.5px;">0</div><div class="p" style="left:985px;top:799.0px;width:22px;text-align:center;line-height:13px;font-size:12px;letter-spacing:0.45px;color:#101010;color:#3a66d6;letter-spacing:0;font-size:11.5px;">x</div><div class="p" style="left:1009px;top:799.0px;width:22px;text-align:center;line-height:13px;font-size:12px;letter-spacing:0.45px;color:#101010;color:#3a66d6;letter-spacing:0;font-size:11.5px;">1</div><div class="p" style="left:1033px;top:799.0px;width:22.5px;text-align:center;line-height:13px;font-size:12px;letter-spacing:0.45px;color:#101010;color:#3a66d6;letter-spacing:0;font-size:11.5px;">x</div><div class="p" style="left:1060px;top:792.5px;line-height:13px;white-space:nowrap;font-size:12px;letter-spacing:0.45px;color:#101010;color:#3a66d6;">424 kbps bit rate is supported from PCD to<br>PICC</div></div>
</body></html>
